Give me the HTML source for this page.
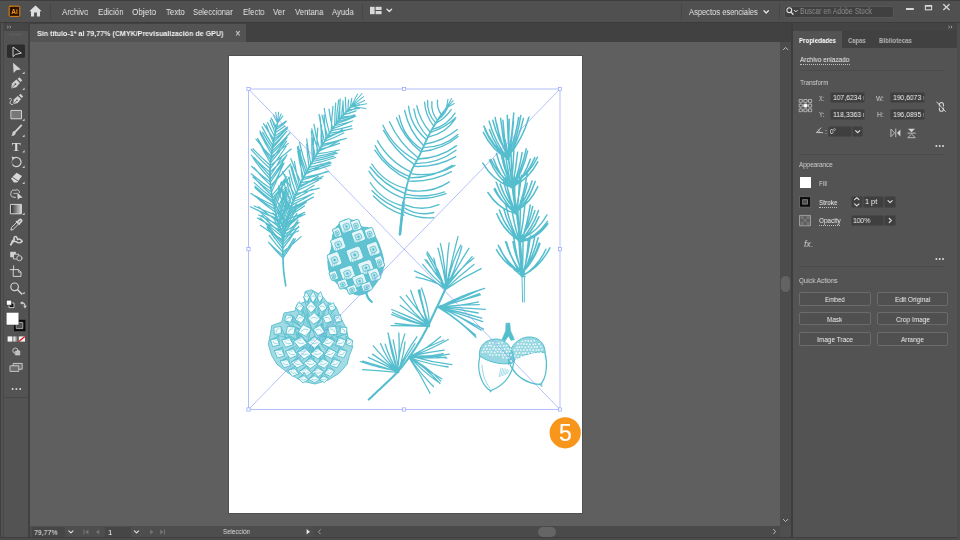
<!DOCTYPE html>
<html lang="es">
<head>
<meta charset="utf-8">
<title>Sin título-1* al 79,77% (CMYK/Previsualización de GPU)</title>
<style>
*{box-sizing:border-box;margin:0;padding:0}
html,body{width:960px;height:540px;overflow:hidden;background:#535353;font-family:"Liberation Sans",sans-serif;font-size:9px;color:#e0e0e0}
#app{position:relative;width:960px;height:540px;overflow:hidden;background:#4f4f4f}
#app>div,#app>span,#app>svg{position:absolute}
.t{white-space:nowrap;display:block;will-change:transform}
.fld{background:#3f3f3f;border:1px solid #484848;border-radius:2px}
.btn{border:1px solid #6b6b6b;border-radius:2px;background:#505050}
.hr{height:1px;background:#474747}
</style>
</head>
<body>
<div id="app">
<div style="left:0px;top:0px;width:960px;height:23px;background:#505050;"></div>
<div style="left:0px;top:0px;width:960px;height:1px;background:#3e3e3e;"></div>
<div style="left:0px;top:22px;width:960px;height:1px;background:#3b3b3b;"></div>
<div style="left:0px;top:23px;width:4px;height:517px;background:#525252;"></div>
<div style="left:0px;top:23px;width:1px;height:517px;background:#404040;"></div>
<div style="left:3px;top:23px;width:1px;height:514px;background:#494949;"></div>
<div style="left:4px;top:23px;width:26px;height:514px;background:#535353;"></div>
<div style="left:4px;top:23px;width:26px;height:8px;background:#464646;"></div>
<div style="left:28px;top:23px;width:2px;height:514px;background:#414141;"></div>
<div style="left:4px;top:397px;width:24px;height:1px;background:#484848;"></div>
<div style="left:30px;top:23px;width:761px;height:19px;background:#414141;"></div>
<div style="left:30px;top:24px;width:216px;height:18px;background:#535353;"></div>
<div style="left:30px;top:42px;width:750px;height:484px;background:#5f5f5f;"></div>
<div style="left:780px;top:42px;width:11px;height:484px;background:#4c4c4c;"></div>
<div style="left:781px;top:276px;width:9px;height:16px;background:#636363;border-radius:4.5px"></div>
<div style="left:30px;top:526px;width:761px;height:11px;background:#4e4e4e;"></div>
<div style="left:313px;top:526px;width:467px;height:11px;background:#4a4a4a;"></div>
<div style="left:538px;top:527px;width:18px;height:10px;background:#656565;border-radius:5px"></div>
<div style="left:780px;top:526px;width:11px;height:11px;background:#4f4f4f;"></div>
<div style="left:32px;top:527px;width:33px;height:10px;background:#464646;"></div>
<div style="left:105px;top:527px;width:26px;height:10px;background:#464646;"></div>
<div style="left:0px;top:537px;width:960px;height:3px;background:#4b4b4b;"></div>
<div style="left:0px;top:537px;width:960px;height:1px;background:#3f3f3f;"></div>
<div style="left:228px;top:55px;width:355px;height:459px;background:#505050;"></div>
<div style="left:229px;top:56px;width:353px;height:457px;background:#ffffff;"></div>
<div style="left:791px;top:23px;width:2px;height:514px;background:#3d3d3d;"></div>
<div style="left:793px;top:23px;width:164px;height:514px;background:#535353;"></div>
<div style="left:793px;top:23px;width:164px;height:8px;background:#444444;"></div>
<div style="left:793px;top:31px;width:164px;height:17px;background:#414141;"></div>
<div style="left:793px;top:31px;width:49px;height:17px;background:#535353;"></div>
<div style="left:957px;top:23px;width:3px;height:517px;background:#4d4d4d;"></div>
<div style="left:784px;top:6px;width:110px;height:11.5px;background:#404040;border:1px solid #565656;border-radius:1px"></div>
<div style="left:50px;top:3px;width:1px;height:17px;background:#474747;"></div>
<div style="left:362px;top:3px;width:1px;height:17px;background:#474747;"></div>
<div style="left:681px;top:3px;width:1px;height:17px;background:#474747;"></div>
<div style="left:779px;top:3px;width:1px;height:17px;background:#474747;"></div>
<span class="t" style="left:61.5px;top:6.9px;font-size:9.6px;line-height:9.6px;color:#e4e4e4;transform:scaleX(0.828);transform-origin:0 0;">Archivo</span>
<span class="t" style="left:97.5px;top:6.9px;font-size:9.6px;line-height:9.6px;color:#e4e4e4;transform:scaleX(0.810);transform-origin:0 0;">Edición</span>
<span class="t" style="left:132.0px;top:6.9px;font-size:9.6px;line-height:9.6px;color:#e4e4e4;transform:scaleX(0.849);transform-origin:0 0;">Objeto</span>
<span class="t" style="left:165.6px;top:6.9px;font-size:9.6px;line-height:9.6px;color:#e4e4e4;transform:scaleX(0.819);transform-origin:0 0;">Texto</span>
<span class="t" style="left:193.3px;top:6.9px;font-size:9.6px;line-height:9.6px;color:#e4e4e4;transform:scaleX(0.791);transform-origin:0 0;">Seleccionar</span>
<span class="t" style="left:242.5px;top:6.9px;font-size:9.6px;line-height:9.6px;color:#e4e4e4;transform:scaleX(0.790);transform-origin:0 0;">Efecto</span>
<span class="t" style="left:273.3px;top:6.9px;font-size:9.6px;line-height:9.6px;color:#e4e4e4;transform:scaleX(0.826);transform-origin:0 0;">Ver</span>
<span class="t" style="left:294.6px;top:6.9px;font-size:9.6px;line-height:9.6px;color:#e4e4e4;transform:scaleX(0.806);transform-origin:0 0;">Ventana</span>
<span class="t" style="left:331.7px;top:6.9px;font-size:9.6px;line-height:9.6px;color:#e4e4e4;transform:scaleX(0.799);transform-origin:0 0;">Ayuda</span>
<span class="t" style="left:688.5px;top:6.9px;font-size:9.6px;line-height:9.6px;color:#e4e4e4;transform:scaleX(0.786);transform-origin:0 0;">Aspectos esenciales</span>
<span class="t" style="left:800.0px;top:8.1px;font-size:8.2px;line-height:8.2px;color:#8c8c8c;transform:scaleX(0.845);transform-origin:0 0;">Buscar en Adobe Stock</span>
<span class="t" style="left:37.0px;top:29.8px;font-size:7.6px;line-height:7.6px;color:#f2f2f2;transform:scaleX(0.936);transform-origin:0 0;font-weight:bold;">Sin título-1* al 79,77% (CMYK/Previsualización de GPU)</span>
<span class="t" style="left:235.0px;top:27.7px;font-size:11.5px;line-height:11.5px;color:#e8e8e8;transform:scaleX(0.834);transform-origin:0 0;">×</span>
<span class="t" style="left:34.4px;top:528.6px;font-size:7.8px;line-height:7.8px;color:#ececec;transform:scaleX(0.892);transform-origin:0 0;">79,77%</span>
<span class="t" style="left:107.6px;top:528.6px;font-size:7.8px;line-height:7.8px;color:#ececec;">1</span>
<span class="t" style="left:223.0px;top:529.2px;font-size:6.8px;line-height:6.8px;color:#dcdcdc;transform:scaleX(0.916);transform-origin:0 0;">Selección</span>
<svg id="art" style="left:0;top:0" width="960" height="540" viewBox="0 0 960 540" fill="none" stroke="#55bece" stroke-linecap="round" stroke-linejoin="round">
<path stroke-width="1.7" d="M285.7 285.8 L285.6 285.0 L285.5 284.1 L285.3 283.0 L285.1 281.8 L284.9 280.4 L284.7 279.0 L284.5 277.5 L284.3 276.0 L284.1 274.5 L283.9 272.9 L283.7 271.4 L283.6 270.0 L283.5 268.6 L283.4 267.1 L283.3 265.6 L283.2 264.1 L283.2 262.6 L283.1 261.0 L283.1 259.5 L283.0 257.9 L283.0 256.4 L282.9 254.9 L282.9 253.4 L282.8 252.0 L282.7 250.6 L282.7 249.3 L282.7 248.0 L282.7 246.7 L282.7 245.4 L282.7 244.1 L282.7 242.8 L282.6 241.6 L282.5 240.2 L282.4 238.9 L282.2 237.5 L282.0 236.0 L281.7 234.5 L281.3 232.9 L280.9 231.4 L280.5 229.7 L280.0 228.1 L279.5 226.4 L279.0 224.7 L278.5 223.0 L277.9 221.3 L277.4 219.6 L277.0 217.8 L276.5 216.0 L276.1 214.2 L275.6 212.3 L275.1 210.4 L274.7 208.5 L274.2 206.5 L273.8 204.6 L273.3 202.6 L272.9 200.6 L272.5 198.7 L272.1 196.8 L271.8 194.9 L271.5 193.0 L271.2 191.2 L271.0 189.4 L270.8 187.6 L270.6 185.8 L270.5 184.1 L270.3 182.3 L270.2 180.6 L270.1 178.9 L270.1 177.1 L270.0 175.4 L270.0 173.7 L270.0 172.0 L270.0 170.3 L270.1 168.6 L270.2 166.9 L270.3 165.2 L270.4 163.5 L270.6 161.8 L270.8 160.1 L271.0 158.5 L271.2 156.8 L271.4 155.2 L271.6 153.6 L271.8 152.0 L272.0 150.4 L272.3 148.8 L272.5 147.2 L272.8 145.6 L273.1 144.0 L273.4 142.4 L273.6 140.9 L273.9 139.4 L274.2 138.0 L274.5 136.6 L274.8 135.2 L275.0 134.0 L275.2 132.8 L275.5 131.6 L275.7 130.5 L276.0 129.4 L276.2 128.4 L276.4 127.4 L276.7 126.4 L276.9 125.6 L277.1 124.8 L277.2 124.1 L277.4 123.5 L277.5 123.0"/>
<path stroke-width="1.25" d="M283.0 257.9 Q275.7 251.0 269.3 243.2 M283.0 257.9 Q289.7 248.7 295.4 238.9 M282.9 255.4 Q275.3 249.2 268.4 242.1 M282.9 255.4 Q288.8 247.3 293.8 238.6 M282.8 252.0 Q275.5 244.2 269.2 235.4 M282.8 252.0 Q292.4 244.8 301.1 236.6 M282.7 248.5 Q274.4 238.2 267.0 227.1 M282.7 248.5 Q289.3 240.2 295.1 231.3 M282.7 245.1 Q274.4 235.8 267.3 225.5 M282.7 245.1 Q291.1 236.0 298.8 226.4 M282.7 242.6 Q273.6 233.3 265.6 223.0 M282.7 242.6 Q290.8 232.9 297.8 222.3 M282.5 239.9 Q271.1 233.1 260.4 225.3 M282.5 239.9 Q290.9 230.5 298.0 220.0 M282.1 236.6 Q270.7 227.7 260.0 217.9 M282.1 236.6 Q289.9 225.4 296.8 213.6 M281.5 233.7 Q271.1 225.2 261.9 215.3 M281.5 233.7 Q289.5 221.9 296.3 209.3 M280.7 230.6 Q268.7 224.9 257.4 218.0 M280.7 230.6 Q289.5 218.8 296.9 206.0 M279.8 227.5 Q268.5 219.5 258.2 210.1 M279.8 227.5 Q288.7 216.2 296.4 204.1 M279.0 224.7 Q268.6 220.4 258.7 215.0 M279.0 224.7 Q283.2 213.9 286.7 202.7 M278.0 221.6 Q267.9 214.7 258.5 206.8 M278.0 221.6 Q284.8 212.1 290.4 202.0 M277.2 218.6 Q263.5 213.6 250.5 206.7 M277.2 218.6 Q282.7 206.8 286.9 194.5 M276.3 215.3 Q265.1 211.1 254.2 206.0 M276.3 215.3 Q281.6 204.2 285.7 192.5 M275.6 212.3 Q266.2 205.7 257.5 198.2 M275.6 212.3 Q282.0 200.2 286.6 187.2 M274.8 209.1 Q262.7 202.2 251.6 193.7 M274.8 209.1 Q280.5 195.1 284.2 180.4 M274.0 205.8 Q262.2 200.3 250.9 193.5 M274.0 205.8 Q279.6 192.9 284.2 179.6 M273.5 203.3 Q263.8 196.0 255.0 187.7 M273.5 203.3 Q277.9 192.8 281.4 181.8 M272.9 200.9 Q263.4 194.3 255.0 186.3 M272.9 200.9 Q279.7 190.9 285.5 180.2 M272.4 198.1 Q262.7 191.0 254.2 182.6 M272.4 198.1 Q281.4 188.3 289.2 177.4 M271.9 195.7 Q262.5 187.0 253.9 177.5 M271.9 195.7 Q279.7 186.4 286.7 176.6 M271.4 192.2 Q261.7 185.1 252.9 177.0 M271.4 192.2 Q277.4 180.0 281.5 167.1 M270.9 188.8 Q260.7 181.8 251.2 173.8 M270.9 188.8 Q278.2 176.3 284.0 163.0 M270.6 185.4 Q261.7 177.1 254.1 167.6 M270.6 185.4 Q281.3 175.5 290.6 164.0 M270.3 182.1 Q260.6 174.8 251.8 166.5 M270.3 182.1 Q277.0 173.0 283.1 163.4 M270.2 179.3 Q260.7 169.2 252.9 157.7 M270.2 179.3 Q279.4 167.8 286.9 154.9 M270.0 175.8 Q261.9 167.2 254.5 157.8 M270.0 175.8 Q276.9 166.2 282.5 155.8 M270.0 172.3 Q260.1 164.3 251.3 155.1 M270.0 172.3 Q278.3 164.8 285.7 156.3 M270.1 168.8 Q260.1 159.7 251.1 149.4 M270.1 168.8 Q278.6 158.1 286.0 146.5 M270.3 165.5 Q261.2 157.6 252.9 148.8 M270.3 165.5 Q281.1 157.7 291.2 149.1 M270.5 162.9 Q263.2 151.2 257.7 138.5 M270.5 162.9 Q279.3 152.7 286.6 141.2 M270.8 159.8 Q263.9 149.6 257.8 138.9 M270.8 159.8 Q279.6 149.1 287.0 137.4 M271.2 156.7 Q263.0 148.5 256.0 139.1 M271.2 156.7 Q280.1 150.5 288.3 143.4 M271.5 154.0 Q265.3 143.8 260.1 133.0 M271.5 154.0 Q279.2 147.0 285.7 138.9 M271.9 151.2 Q265.2 141.6 260.0 131.0 M271.9 151.2 Q281.4 142.6 290.0 132.9 M272.4 148.2 Q267.1 140.6 262.7 132.4 M272.4 148.2 Q278.8 141.7 284.3 134.2 M272.8 145.6 Q266.9 136.6 262.1 126.9 M272.8 145.6 Q280.3 138.8 286.9 131.1 M273.4 142.3 Q269.4 133.8 266.3 125.0 M273.4 142.3 Q280.7 135.6 287.3 128.1 M273.9 139.3 Q268.3 131.8 263.5 123.6 M273.9 139.3 Q280.7 134.4 286.9 128.7 M274.6 136.2 Q270.7 129.6 267.6 122.6 M274.6 136.2 Q281.5 132.1 287.7 127.1 M275.3 132.7 Q272.3 126.7 270.3 120.2 M275.3 132.7 Q280.3 129.6 285.0 126.1 M275.9 129.8 Q273.9 124.9 272.3 119.7 M275.9 129.8 Q281.1 126.3 285.8 122.0 M276.5 127.3 Q273.6 122.8 271.1 118.1 M276.5 127.3 Q281.5 124.4 286.3 121.1"/>
<path stroke-width="1.7" d="M283.2 240.0 L283.4 239.1 L283.6 238.0 L283.9 236.7 L284.1 235.3 L284.5 233.7 L284.8 232.1 L285.1 230.3 L285.5 228.6 L285.9 226.9 L286.3 225.2 L286.6 223.5 L287.0 222.0 L287.4 220.6 L287.7 219.1 L288.1 217.7 L288.5 216.3 L288.9 214.9 L289.3 213.5 L289.7 212.1 L290.1 210.7 L290.6 209.3 L291.0 207.9 L291.5 206.4 L292.0 205.0 L292.5 203.5 L293.0 202.0 L293.6 200.5 L294.2 199.0 L294.7 197.4 L295.3 195.9 L295.9 194.3 L296.6 192.8 L297.2 191.3 L297.8 189.8 L298.4 188.4 L299.0 187.0 L299.6 185.7 L300.2 184.4 L300.7 183.2 L301.3 182.0 L301.8 180.9 L302.4 179.7 L303.0 178.6 L303.6 177.4 L304.3 176.1 L305.0 174.8 L305.7 173.5 L306.5 172.0 L307.4 170.4 L308.3 168.8 L309.3 167.0 L310.3 165.2 L311.4 163.4 L312.5 161.5 L313.6 159.6 L314.7 157.8 L315.8 155.9 L316.9 154.0 L318.0 152.2 L319.0 150.5 L320.0 148.8 L321.1 147.0 L322.1 145.3 L323.1 143.6 L324.2 141.9 L325.2 140.2 L326.2 138.5 L327.2 136.9 L328.2 135.3 L329.2 133.8 L330.1 132.4 L331.0 131.0 L331.8 129.7 L332.7 128.6 L333.4 127.5 L334.1 126.5 L334.9 125.5 L335.6 124.6 L336.3 123.7 L337.0 122.8 L337.7 121.9 L338.4 120.9 L339.2 120.0 L340.0 119.0 L340.9 117.9 L341.8 116.8 L342.9 115.6 L343.9 114.4 L345.0 113.2 L346.1 112.0 L347.1 110.8 L348.1 109.8 L349.0 108.8 L349.8 107.9 L350.5 107.1 L351.0 106.5"/>
<path stroke-width="1.25" d="M283.8 237.0 Q278.3 228.5 274.2 219.1 M283.8 237.0 Q291.4 234.3 298.7 230.8 M284.4 234.1 Q279.4 225.9 275.3 217.3 M284.4 234.1 Q291.7 231.1 298.7 227.2 M285.0 231.2 Q280.7 221.9 277.7 212.0 M285.0 231.2 Q292.3 227.4 299.1 222.6 M285.6 227.9 Q279.0 220.7 273.0 212.9 M285.6 227.9 Q294.1 221.5 301.9 214.3 M286.2 225.4 Q279.6 214.5 274.5 202.8 M286.2 225.4 Q293.7 220.7 300.5 214.8 M286.9 222.4 Q281.0 214.2 275.7 205.4 M286.9 222.4 Q296.2 218.7 305.1 214.3 M287.8 219.0 Q280.8 208.1 274.6 196.7 M287.8 219.0 Q296.4 216.3 304.7 212.4 M288.5 216.2 Q283.1 205.2 279.4 193.4 M288.5 216.2 Q296.7 211.5 304.4 205.9 M289.3 213.6 Q285.3 203.3 282.1 192.8 M289.3 213.6 Q298.0 208.4 306.2 202.3 M290.2 210.4 Q285.3 199.0 281.4 187.1 M290.2 210.4 Q298.6 206.2 306.5 201.2 M291.0 208.1 Q284.3 197.2 278.6 185.8 M291.0 208.1 Q302.4 203.1 313.4 197.1 M292.0 204.9 Q286.8 193.3 283.3 181.0 M292.0 204.9 Q302.3 200.2 311.8 194.3 M293.2 201.5 Q288.0 188.3 284.6 174.5 M293.2 201.5 Q303.7 198.0 313.7 193.3 M294.1 199.2 Q290.8 188.4 289.0 177.1 M294.1 199.2 Q303.3 194.6 312.1 189.2 M295.3 196.0 Q288.3 184.1 282.5 171.6 M295.3 196.0 Q305.0 191.2 314.1 185.3 M296.2 193.6 Q291.8 182.2 289.1 170.1 M296.2 193.6 Q307.8 191.4 319.2 188.1 M297.6 190.3 Q293.7 178.2 290.7 165.8 M297.6 190.3 Q308.3 185.8 318.5 180.2 M298.6 187.9 Q294.6 177.2 291.7 166.2 M298.6 187.9 Q308.7 182.5 318.3 176.4 M299.6 185.7 Q296.3 173.8 294.4 161.5 M299.6 185.7 Q311.6 181.7 323.1 176.2 M301.0 182.7 Q295.3 171.0 290.9 158.7 M301.0 182.7 Q311.4 181.2 321.7 178.3 M302.3 179.8 Q300.2 165.2 300.2 150.2 M302.3 179.8 Q314.6 176.6 326.4 171.6 M303.5 177.6 Q299.7 164.6 297.7 151.2 M303.5 177.6 Q316.3 175.2 328.8 171.3 M305.1 174.5 Q300.7 160.9 297.4 147.0 M305.1 174.5 Q314.7 170.0 323.7 164.5 M306.3 172.3 Q301.5 159.5 298.2 146.1 M306.3 172.3 Q318.5 169.4 330.3 165.1 M307.5 170.2 Q302.7 156.5 299.5 142.4 M307.5 170.2 Q319.5 167.0 331.2 162.9 M309.1 167.3 Q307.4 155.7 306.7 144.0 M309.1 167.3 Q319.7 165.3 329.9 161.8 M310.9 164.2 Q308.1 151.6 306.7 138.8 M310.9 164.2 Q323.3 161.6 335.4 157.5 M312.5 161.5 Q311.6 149.6 311.8 137.7 M312.5 161.5 Q323.3 159.4 333.9 156.1 M313.7 159.4 Q312.9 147.1 313.7 134.8 M313.7 159.4 Q325.7 156.9 337.4 153.2 M315.3 156.8 Q312.7 144.0 311.3 131.1 M315.3 156.8 Q325.7 155.3 335.8 152.2 M317.1 153.8 Q316.5 140.9 317.7 128.1 M317.1 153.8 Q328.2 152.4 339.3 150.0 M318.4 151.5 Q314.5 140.4 311.8 128.9 M318.4 151.5 Q328.9 147.1 338.7 141.0 M319.7 149.3 Q315.9 137.0 314.0 124.3 M319.7 149.3 Q329.8 147.1 339.5 143.4 M321.3 146.7 Q320.8 136.0 321.6 125.2 M321.3 146.7 Q331.2 143.6 340.9 139.7 M322.7 144.3 Q320.9 130.7 320.1 116.9 M322.7 144.3 Q334.5 141.8 346.2 138.3 M324.5 141.3 Q321.1 128.0 319.0 114.4 M324.5 141.3 Q334.4 137.9 343.7 133.0 M326.1 138.7 Q324.6 126.9 324.1 115.1 M326.1 138.7 Q334.6 134.7 342.5 129.6 M327.6 136.3 Q324.3 125.8 322.0 115.1 M327.6 136.3 Q336.7 133.7 345.5 130.1 M329.5 133.3 Q326.1 121.1 324.2 108.5 M329.5 133.3 Q340.9 131.6 352.1 128.6 M331.3 130.6 Q331.5 118.5 333.0 106.4 M331.3 130.6 Q341.5 128.7 351.6 125.8 M332.7 128.6 Q330.3 119.0 329.0 109.1 M332.7 128.6 Q341.5 125.9 349.9 122.0 M334.7 125.7 Q334.7 114.3 335.7 103.0 M334.7 125.7 Q343.7 123.7 352.6 121.0 M336.3 123.6 Q336.8 111.8 338.7 100.1 M336.3 123.6 Q346.3 120.6 355.7 116.1 M338.1 121.3 Q338.8 112.5 340.2 103.7 M338.1 121.3 Q345.4 119.5 352.6 117.0 M339.8 119.2 Q339.4 109.1 340.2 99.0 M339.8 119.2 Q347.4 117.5 354.7 114.9 M341.7 117.0 Q342.0 109.8 343.0 102.6 M341.7 117.0 Q348.2 116.7 354.6 115.7 M343.7 114.6 Q343.1 107.8 343.0 100.9 M343.7 114.6 Q350.0 113.1 356.0 110.8 M346.1 112.0 Q345.5 104.6 345.4 97.3 M346.1 112.0 Q352.0 110.1 357.6 107.4 M348.1 109.8 Q348.1 104.8 348.6 99.8 M348.1 109.8 Q353.7 109.5 359.4 108.5 M350.5 107.1 Q350.9 102.7 351.8 98.4 M350.5 107.1 Q355.0 106.3 359.4 104.9"/>
<path stroke-width="1.05" d="M351.0 106.5 Q354.3 100.3 357.6 94.1 M351.0 106.5 Q356.5 100.0 361.9 93.5 M351.0 106.5 Q357.3 101.6 363.6 96.6 M351.0 106.5 Q357.9 103.4 364.7 100.4 M351.0 106.5 Q358.9 105.1 366.8 103.7 M351.0 106.5 Q358.4 107.5 365.9 108.6 M277.5 123.0 Q275.4 119.0 273.3 115.1 M277.5 123.0 Q276.5 117.6 275.6 112.2 M277.5 123.0 Q278.1 117.5 278.6 112.1 M277.5 123.0 Q279.4 118.4 281.2 113.7 M277.5 123.0 Q280.3 119.5 283.0 115.9"/>
<path stroke-width="1.0" d="M282.5 238.0 L282.5 237.2 L282.6 236.3 L282.7 235.1 L282.7 233.9 L282.8 232.5 L282.9 231.1 L283.0 229.5 L283.1 228.0 L283.2 226.4 L283.3 224.9 L283.4 223.4 L283.5 222.0 L283.6 220.6 L283.8 219.2 L284.0 217.8 L284.1 216.3 L284.3 214.9 L284.5 213.4 L284.7 212.0 L284.9 210.6 L285.1 209.1 L285.2 207.7 L285.4 206.3 L285.5 205.0 L285.6 203.6 L285.7 202.2 L285.7 200.8 L285.8 199.3 L285.8 197.8 L285.9 196.4 L285.9 195.1 L285.9 193.8 L285.9 192.6 L286.0 191.6 L286.0 190.7 L286.0 190.0"/>
<path stroke-width="0.9" d="M283.0 228.4 Q280.9 224.9 279.4 221.1 M283.0 228.4 Q285.0 225.8 286.4 222.8 M283.2 226.2 Q280.8 222.7 279.1 218.8 M283.2 226.2 Q285.3 223.1 286.8 219.6 M283.4 223.7 Q281.6 220.2 280.6 216.5 M283.4 223.7 Q286.1 220.3 288.2 216.6 M283.6 221.2 Q281.8 217.2 280.7 212.9 M283.6 221.2 Q286.9 217.6 289.4 213.3 M283.8 218.8 Q281.9 214.7 281.1 210.3 M283.8 218.8 Q286.9 215.4 289.6 211.7 M284.1 216.4 Q281.8 212.2 280.2 207.6 M284.1 216.4 Q287.9 212.3 291.1 207.6 M284.4 214.5 Q282.3 210.1 281.2 205.3 M284.4 214.5 Q287.8 210.3 290.3 205.3 M284.7 212.1 Q282.4 206.9 280.9 201.4 M284.7 212.1 Q287.9 208.8 290.6 205.1 M285.0 209.5 Q282.7 204.5 281.3 199.1 M285.0 209.5 Q287.8 206.0 289.9 202.0 M285.3 206.9 Q283.1 203.4 281.5 199.5 M285.3 206.9 Q288.6 202.7 291.2 198.0 M285.5 205.0 Q283.6 201.1 282.6 196.8 M285.5 205.0 Q288.7 201.4 290.8 197.0 M285.7 202.2 Q283.8 198.9 282.8 195.3 M285.7 202.2 Q287.9 199.4 289.5 196.2 M285.8 199.9 Q283.9 196.8 282.5 193.4 M285.8 199.9 Q287.7 196.9 289.0 193.6 M285.9 197.1 Q284.0 193.7 282.6 190.2 M285.9 197.1 Q287.9 194.0 289.2 190.6 M285.9 194.7 Q284.5 192.2 283.5 189.5 M285.9 194.7 Q287.6 192.6 288.8 190.3 M286.0 191.9 Q284.8 189.9 284.2 187.7 M286.0 191.9 Q287.2 190.3 288.2 188.5"/>
<path stroke-width="1.8" d="M399.9 234.4 L400.0 233.5 L400.2 232.3 L400.3 230.9 L400.5 229.4 L400.6 227.7 L400.8 225.9 L401.0 224.1 L401.2 222.2 L401.4 220.3 L401.6 218.5 L401.8 216.8 L402.0 215.2 L402.2 213.7 L402.3 212.2 L402.5 210.8 L402.6 209.4 L402.8 208.0 L403.0 206.6 L403.1 205.2 L403.3 203.7 L403.5 202.2 L403.8 200.7 L404.1 199.1 L404.4 197.4 L404.7 195.6 L405.1 193.8 L405.5 191.8 L406.0 189.8 L406.4 187.7 L406.9 185.6 L407.4 183.5 L408.0 181.4 L408.5 179.4 L409.1 177.4 L409.7 175.5 L410.3 173.8 L410.9 172.1 L411.6 170.5 L412.3 169.0 L413.0 167.6 L413.7 166.2 L414.5 164.8 L415.2 163.4 L416.0 162.0 L416.8 160.6 L417.6 159.2 L418.4 157.6 L419.2 156.0 L420.0 154.3 L420.8 152.5 L421.7 150.6 L422.6 148.7 L423.5 146.7 L424.3 144.7 L425.2 142.8 L426.1 140.8 L427.0 138.9 L427.9 137.1 L428.7 135.4 L429.5 133.8 L430.3 132.3 L431.1 130.9 L431.9 129.5 L432.6 128.2 L433.4 126.9 L434.1 125.7 L434.8 124.5 L435.6 123.4 L436.3 122.3 L437.0 121.2 L437.7 120.1 L438.4 119.0 L439.1 117.9 L439.9 116.8 L440.6 115.8 L441.4 114.7 L442.2 113.6 L443.0 112.6 L443.7 111.7 L444.4 110.8 L445.0 110.0 L445.5 109.2 L446.0 108.6 L446.4 108.1"/>
<path stroke-width="2.6" d="M399.9 234.4 L400.0 233.5 L400.2 232.3 L400.3 230.9 L400.5 229.4 L400.6 227.7 L400.8 225.9 L401.0 224.1 L401.2 222.2 L401.4 220.3 L401.6 218.5 L401.8 216.8 L402.0 215.2 L402.2 213.7 L402.3 212.2 L402.5 210.8 L402.6 209.4 L402.8 208.0 L403.0 206.6 L403.1 205.2 L403.3 203.7 L403.5 202.2"/>
<path stroke-width="1.35" d="M403.8 215.2 Q386.2 209.4 373.4 196.0 M404.1 210.9 Q385.6 204.7 372.0 190.7 M404.4 206.3 Q382.4 201.4 370.2 182.5 M405.0 198.9 Q382.2 191.2 368.9 171.2 M405.8 193.8 Q384.0 185.7 370.1 167.0 M406.7 188.6 Q384.3 183.4 371.8 164.0 M408.8 179.7 Q387.6 169.8 374.8 150.1 M410.0 176.7 Q386.4 168.0 375.1 145.6 M411.8 172.3 Q389.6 162.0 377.5 140.8 M414.7 164.9 Q395.0 151.4 383.5 130.4 M416.5 160.5 Q393.8 148.5 382.9 125.3 M417.7 157.5 Q399.1 143.2 389.5 121.7 M420.7 151.6 Q403.6 138.2 396.5 117.8 M421.8 149.3 Q403.2 137.2 399.2 115.4 M423.6 145.7 Q409.0 130.8 404.6 110.5 M426.6 139.7 Q410.8 126.6 408.5 106.2 M428.0 137.1 Q416.3 125.3 413.9 109.0 M430.4 132.3 Q420.1 120.9 416.8 105.8 M434.0 126.4 Q425.4 115.8 424.6 102.2 M435.9 123.2 Q426.8 113.6 427.6 100.4 M437.5 120.5 Q430.8 112.2 431.9 101.6 M441.4 114.6 Q436.5 108.1 437.5 100.1 M404.4 212.2 Q418.3 219.2 433.7 217.6 M404.7 208.2 Q418.3 216.5 433.7 212.5 M405.0 204.8 Q422.0 211.8 439.0 204.7 M405.9 197.4 Q426.5 200.8 446.1 193.6 M406.5 194.4 Q425.8 198.6 444.5 191.9 M407.3 190.0 Q430.0 194.5 449.4 181.9 M409.7 181.2 Q431.9 182.1 451.4 171.7 M410.6 177.8 Q433.3 177.6 452.4 165.4 M411.8 173.8 Q434.8 177.4 454.9 165.3 M414.7 166.4 Q436.6 167.3 455.8 156.6 M415.8 163.6 Q438.1 163.5 456.0 150.2 M417.7 159.0 Q439.3 158.4 456.6 145.6 M421.5 151.6 Q442.2 149.8 458.1 136.6 M423.4 147.6 Q443.1 147.5 457.9 134.5 M425.1 144.2 Q443.1 141.2 457.3 129.6 M428.6 136.8 Q445.6 133.5 455.1 119.1 M431.1 132.1 Q445.2 127.8 455.8 117.5 M432.5 129.4 Q446.9 125.6 455.1 113.1 M436.3 122.9 Q445.5 118.1 451.2 109.6 M438.5 119.3 Q446.2 114.1 447.8 105.0 M439.9 117.0 Q446.4 112.7 448.3 105.1"/>
<path stroke-width="1.1" d="M446.4 108.1 Q447.2 103.6 448.0 99.2 M446.4 108.1 Q449.0 103.2 451.6 98.4 M446.4 108.1 Q449.7 104.4 453.1 100.6 M446.4 108.1 Q450.3 105.8 454.2 103.6"/>
<path stroke-width="1.8" d="M523.0 276.0 L522.9 274.3 L522.7 272.3 L522.5 269.8 L522.2 267.0 L522.0 264.0 L521.7 260.9 L521.4 257.6 L521.1 254.3 L520.9 251.0 L520.6 247.8 L520.3 244.8 L520.0 242.0 L519.7 239.3 L519.5 236.7 L519.2 234.1 L518.9 231.6 L518.6 229.0 L518.3 226.5 L518.0 224.0 L517.7 221.6 L517.4 219.1 L517.1 216.7 L516.8 214.3 L516.5 212.0 L516.2 209.7 L515.9 207.5 L515.5 205.3 L515.2 203.1 L514.9 201.0 L514.5 198.9 L514.2 196.8 L513.9 194.7 L513.5 192.5 L513.2 190.4 L512.8 188.2 L512.5 186.0 L512.2 183.7 L511.8 181.3 L511.4 178.9 L511.1 176.4 L510.7 174.0 L510.4 171.5 L510.0 169.1 L509.6 166.7 L509.3 164.3 L509.0 162.1 L508.6 160.0 L508.3 158.0 L508.0 156.1 L507.7 154.2 L507.3 152.4 L507.0 150.6 L506.7 148.9 L506.4 147.2 L506.1 145.7 L505.8 144.3 L505.6 143.0 L505.3 141.8 L505.2 140.8 L505.0 140.0"/>
<path stroke-width="1.0" d="M522.0 277.0 L522.6 302.0 M524.4 277.0 L524.3 302.0"/>
<path stroke-width="1.6" d="M521.4 276.5 L525.0 276.5"/>
<path stroke-width="1.5" d="M508.7 159.2 Q492.3 150.8 483.3 132.4 M509.0 159.0 Q493.0 148.8 484.9 129.8 M508.0 158.0 Q491.9 146.2 483.9 126.1 M508.6 159.5 Q495.6 147.4 489.4 129.5 M508.0 158.6 Q494.9 142.2 489.1 121.1 M509.1 156.3 Q497.7 140.1 492.8 120.2 M508.5 157.7 Q500.1 141.6 496.6 123.3 M508.3 158.2 Q498.9 139.0 495.1 117.6 M507.1 157.1 Q502.4 137.9 500.6 118.2 M507.5 159.2 Q504.1 139.9 502.9 120.3 M509.2 157.1 Q507.8 136.3 507.3 115.3 M508.1 158.8 Q508.9 139.0 509.2 119.2 M508.0 158.0 Q512.2 135.7 513.8 112.9 M508.3 158.9 Q512.1 140.1 513.6 120.9 M509.4 157.0 Q517.6 137.0 520.8 115.4 M507.8 156.7 Q515.5 138.0 518.6 117.6 M508.3 157.1 Q519.0 139.2 523.4 118.3 M508.2 156.3 Q522.6 139.5 528.9 117.3 M511.1 187.0 Q493.5 181.3 482.8 163.1 M512.9 184.6 Q498.5 176.1 490.9 159.4 M511.1 187.4 Q496.7 177.5 489.5 160.0 M511.1 186.7 Q499.2 175.4 493.6 158.9 M512.6 187.3 Q501.3 172.3 496.5 153.5 M511.5 186.2 Q503.4 168.5 500.2 149.1 M512.1 187.0 Q505.6 171.8 502.9 155.1 M511.8 186.9 Q507.1 169.7 505.2 151.7 M512.8 185.9 Q511.3 166.2 510.7 146.4 M511.2 187.8 Q513.3 166.9 514.1 145.9 M512.1 186.7 Q516.0 169.8 517.6 152.3 M512.4 187.6 Q519.4 170.8 522.1 152.6 M512.1 186.8 Q522.1 169.1 526.3 148.7 M513.0 186.7 Q523.3 170.5 527.6 151.1 M513.2 187.9 Q525.0 176.0 530.4 159.1 M512.9 185.6 Q527.5 175.4 534.8 157.6 M511.8 184.8 Q528.5 176.1 537.5 157.3 M512.8 186.2 Q528.8 179.2 537.8 161.8 M515.4 213.3 Q498.6 209.3 487.9 192.5 M517.1 211.0 Q502.5 205.0 494.2 189.3 M516.9 213.4 Q502.5 205.1 494.9 188.4 M516.4 213.8 Q502.6 201.1 496.2 182.3 M516.5 211.5 Q505.2 200.2 500.1 184.1 M516.5 213.5 Q507.1 198.0 503.2 179.9 M516.1 213.5 Q509.0 198.1 506.1 181.1 M517.2 213.9 Q513.2 197.6 511.6 180.8 M515.7 212.4 Q512.6 194.2 511.5 175.7 M515.3 213.9 Q514.7 195.1 514.4 176.3 M517.1 212.5 Q519.0 194.7 519.7 176.9 M515.4 212.4 Q519.8 194.1 521.5 175.3 M517.4 211.4 Q524.4 193.1 527.2 173.4 M516.2 213.4 Q524.1 199.4 527.3 183.2 M516.0 211.2 Q527.1 198.2 532.1 181.0 M515.5 213.2 Q529.0 200.3 535.2 181.5 M515.7 212.9 Q527.6 202.5 533.2 186.7 M516.7 210.9 Q530.5 202.7 537.8 186.6 M519.6 240.4 Q505.6 232.8 498.1 216.9 M519.4 240.8 Q504.5 231.4 496.8 213.7 M518.8 240.2 Q505.6 228.0 499.4 209.9 M519.7 242.5 Q508.5 227.4 503.7 208.5 M519.0 242.1 Q509.6 224.4 505.7 204.4 M519.2 240.6 Q512.9 221.0 510.5 200.4 M520.8 242.6 Q518.3 224.9 517.4 206.9 M520.1 240.4 Q518.2 222.4 517.5 204.4 M519.4 242.3 Q520.2 221.5 520.6 200.7 M520.0 239.6 Q523.7 221.3 525.1 202.7 M520.6 242.9 Q527.5 224.6 530.2 205.1 M520.2 241.3 Q529.1 225.0 532.7 206.4 M518.6 239.9 Q529.8 227.5 534.9 210.6 M519.6 241.5 Q532.5 228.7 538.5 210.4 M518.9 242.4 Q532.3 233.0 539.0 216.6 M518.6 239.7 Q536.4 233.6 546.9 215.0 M520.2 240.6 Q536.7 237.5 547.5 221.3 M519.4 241.6 Q536.1 239.8 547.8 223.7 M523.4 273.1 Q506.5 267.3 496.4 249.6 M522.4 273.2 Q506.5 263.8 498.2 245.3 M521.4 275.6 Q507.1 265.3 499.9 247.5 M523.5 274.7 Q511.0 260.4 505.5 241.4 M522.6 275.9 Q511.4 261.0 506.6 242.3 M523.6 275.1 Q516.0 259.3 512.9 241.7 M522.4 275.6 Q516.1 256.5 513.6 236.3 M523.2 275.2 Q519.9 255.5 518.6 235.6 M521.6 273.7 Q519.4 253.6 518.6 233.5 M522.3 274.7 Q522.9 257.6 523.1 240.4 M523.7 274.8 Q527.1 257.3 528.5 239.4 M522.8 274.4 Q528.3 255.6 530.4 236.0 M522.9 275.0 Q531.5 256.1 535.0 235.3 M521.5 274.7 Q533.2 258.1 538.2 237.8 M522.4 272.7 Q533.9 260.2 539.2 243.0 M521.6 273.4 Q534.1 261.2 539.9 243.7 M522.6 275.9 Q537.9 267.0 545.9 249.3 M522.9 275.3 Q540.3 267.0 549.9 247.8"/>
<path stroke-width="2.1" d="M368.7 399.6 L369.3 399.0 L370.1 398.3 L371.1 397.4 L372.1 396.4 L373.2 395.3 L374.4 394.2 L375.7 393.0 L376.9 391.8 L378.2 390.6 L379.5 389.4 L380.8 388.2 L382.0 387.0 L383.2 385.9 L384.4 384.7 L385.7 383.6 L386.9 382.4 L388.2 381.2 L389.5 380.0 L390.8 378.8 L392.1 377.6 L393.4 376.3 L394.6 375.1 L395.8 373.8 L397.0 372.5 L398.2 371.2 L399.3 369.9 L400.4 368.6 L401.5 367.3 L402.5 366.0 L403.6 364.7 L404.6 363.3 L405.7 361.9 L406.8 360.5 L407.8 359.1 L408.9 357.6 L410.0 356.0 L411.1 354.4 L412.2 352.8 L413.3 351.1 L414.5 349.5 L415.6 347.7 L416.7 346.0 L417.8 344.2 L419.0 342.4 L420.1 340.5 L421.2 338.6 L422.4 336.6 L423.5 334.6 L424.6 332.5 L425.8 330.3 L427.0 327.9 L428.2 325.5 L429.4 323.1 L430.5 320.7 L431.7 318.2 L432.8 315.8 L434.0 313.4 L435.0 311.2 L436.0 309.0 L437.0 307.0 L437.9 305.1 L438.8 303.2 L439.7 301.4 L440.5 299.7 L441.3 298.0 L442.0 296.3 L442.8 294.8 L443.5 293.3 L444.1 291.8 L444.7 290.5 L445.3 289.2 L445.8 288.0 L446.3 286.9 L446.7 285.8 L447.1 284.8 L447.4 283.9 L447.7 283.1 L448.0 282.3 L448.2 281.6 L448.4 281.0 L448.6 280.4 L448.7 279.9 L448.9 279.4 L449.0 279.0"/>
<path stroke-width="1.3" d="M446.4 288.9 Q462.9 277.4 481.2 268.7 M445.7 288.9 Q459.2 275.9 473.9 264.4 M445.7 287.5 Q458.7 271.9 472.1 256.6 M445.2 287.6 Q457.2 270.9 473.8 258.1 M446.4 287.3 Q456.9 267.3 468.9 248.3 M446.5 287.4 Q456.2 267.8 461.8 246.5 M445.4 288.9 Q451.3 262.7 458.0 236.7 M446.7 288.4 Q450.1 265.8 460.8 245.0 M445.5 287.3 Q445.7 265.3 440.4 243.6 M446.0 287.0 Q446.2 265.0 449.1 243.0 M446.4 288.0 Q443.5 267.8 438.0 248.2 M444.9 289.0 Q439.3 269.2 427.2 251.9 M444.8 288.6 Q436.7 270.8 426.8 253.8 M444.9 287.4 Q437.1 273.8 433.8 258.1 M446.7 288.9 Q436.7 273.7 425.0 259.6 M446.4 287.2 Q435.3 274.6 426.5 260.1 M444.9 288.9 Q431.1 277.8 414.4 270.9 M446.6 287.7 Q433.1 277.9 422.7 264.3 M445.4 287.4 Q431.6 280.1 416.0 277.1 M429.6 325.3 Q428.5 306.3 421.5 288.0 M428.4 325.5 Q423.2 307.8 419.1 289.9 M428.4 325.1 Q421.7 308.4 420.0 290.0 M429.3 325.3 Q422.4 308.4 418.3 290.5 M429.2 325.2 Q418.1 310.0 406.3 295.3 M428.2 325.9 Q416.5 309.9 410.7 290.4 M428.5 326.0 Q413.2 312.5 400.2 296.6 M428.4 325.3 Q414.7 314.7 400.2 305.2 M428.9 326.0 Q410.8 316.7 391.7 309.5 M429.2 326.7 Q413.9 318.7 397.9 312.2 M429.0 326.3 Q410.2 321.1 392.5 312.5 M428.2 326.0 Q409.4 321.9 391.6 314.3 M429.5 326.3 Q412.2 325.4 395.0 323.5 M428.1 326.3 Q409.7 325.7 391.2 325.6 M439.6 306.7 Q458.3 320.0 475.5 335.1 M438.7 307.7 Q459.0 319.9 475.9 337.2 M439.9 307.0 Q461.8 317.9 483.4 329.1 M439.9 307.0 Q461.3 317.2 481.3 330.2 M438.3 307.6 Q460.7 314.0 482.7 321.6 M439.2 307.5 Q460.7 311.8 481.7 318.2 M438.3 306.9 Q458.3 308.9 478.1 313.0 M439.3 306.1 Q462.3 308.0 485.3 309.4 M438.3 306.6 Q458.5 306.5 478.5 301.8 M438.9 306.8 Q459.0 304.9 479.2 304.7 M439.8 306.0 Q460.3 301.1 480.4 294.8 M438.2 307.7 Q459.2 301.6 479.6 293.7 M438.2 307.1 Q459.7 299.6 480.3 289.7 M439.6 306.8 Q461.0 295.2 484.6 288.3 M397.1 372.2 Q405.7 357.7 415.0 343.7 M398.0 371.7 Q405.0 353.1 416.9 336.8 M397.9 372.2 Q403.3 357.7 405.0 342.0 M397.6 371.9 Q400.0 352.6 398.8 333.0 M397.6 372.9 Q398.3 353.1 404.8 333.9 M398.8 372.0 Q396.5 355.9 393.2 339.9 M397.8 371.6 Q393.0 352.2 388.0 333.0 M397.7 371.6 Q391.5 354.6 388.7 336.5 M397.9 371.5 Q389.5 359.0 385.2 344.2 M397.3 371.3 Q386.7 359.1 380.5 343.6 M397.7 372.3 Q385.0 359.5 373.2 345.9 M398.3 371.6 Q385.3 363.0 372.5 354.1 M397.9 371.9 Q383.4 364.0 368.3 357.4 M396.9 371.5 Q379.8 366.0 362.5 361.1 M397.9 371.0 Q378.7 368.1 360.2 361.5 M398.2 372.3 Q380.4 370.8 362.6 369.6 M409.6 357.5 Q419.9 373.2 433.4 386.5 M408.9 357.5 Q420.7 374.6 430.0 393.2 M410.4 357.6 Q422.5 371.3 437.9 381.7 M409.8 356.5 Q424.3 369.4 441.8 378.7 M408.9 356.3 Q425.9 368.0 440.0 383.5 M408.9 357.2 Q426.7 366.3 440.9 381.1 M408.9 357.5 Q427.9 364.1 448.1 367.0 M410.2 356.1 Q430.7 361.9 451.9 364.7 M410.0 356.6 Q427.5 359.0 445.4 357.1 M409.0 356.6 Q426.2 357.7 443.3 353.7 M410.3 357.6 Q429.9 358.3 449.3 354.1 M410.0 356.8 Q428.3 354.6 446.8 358.0 M410.2 356.1 Q427.0 352.3 444.2 350.1 M409.9 357.0 Q429.8 349.9 448.3 339.5 M410.3 356.8 Q426.6 348.8 440.5 336.7 M410.3 356.2 Q426.5 346.9 443.9 340.0"/>
<path stroke-width="1.0" fill="#55bece" fill-opacity="0.93" d="M339.0 224.0 L339.7 223.4 L340.6 222.6 L341.7 221.7 L342.9 220.7 L344.2 220.0 L345.5 219.5 L346.9 219.4 L348.5 219.4 L350.1 219.6 L351.8 220.0 L353.4 220.4 L354.8 221.0 L356.0 221.7 L357.1 222.7 L358.1 223.7 L359.1 224.8 L360.1 225.7 L361.3 226.5 L362.6 227.0 L364.0 227.2 L365.5 227.3 L366.9 227.4 L368.3 227.8 L369.6 228.5 L370.8 229.6 L372.0 231.1 L373.1 232.7 L374.1 234.4 L375.1 236.2 L376.0 237.8 L376.8 239.3 L377.5 240.7 L378.2 242.2 L378.8 243.7 L379.4 245.2 L380.0 247.0 L380.7 249.0 L381.4 251.1 L382.1 253.4 L382.7 255.7 L383.2 257.9 L383.5 260.0 L383.7 261.9 L383.7 263.8 L383.6 265.6 L383.4 267.4 L383.1 269.2 L382.6 271.0 L382.0 272.9 L381.2 274.7 L380.3 276.6 L379.2 278.4 L378.1 280.3 L377.0 282.0 L375.8 283.7 L374.5 285.5 L373.2 287.2 L371.8 288.8 L370.3 290.3 L368.7 291.5 L367.0 292.5 L365.2 293.4 L363.3 294.2 L361.4 294.7 L359.5 295.0 L357.6 295.0 L355.8 294.6 L353.9 293.9 L352.1 293.0 L350.2 291.9 L348.4 290.7 L346.5 289.6 L344.6 288.5 L342.6 287.3 L340.6 286.0 L338.7 284.7 L336.9 283.4 L335.4 282.0 L334.1 280.6 L333.0 279.3 L332.0 277.8 L331.2 276.3 L330.4 274.7 L329.8 273.0 L329.2 271.1 L328.7 269.0 L328.3 266.8 L328.1 264.5 L327.9 262.2 L328.0 260.0 L328.3 257.8 L328.9 255.6 L329.7 253.4 L330.5 251.2 L331.2 249.1 L331.7 247.0 L332.0 245.0 L332.1 243.1 L332.2 241.2 L332.3 239.3 L332.4 237.6 L332.6 236.0 L332.9 234.5 L333.4 233.1 L333.8 231.8 L334.3 230.6 L334.9 229.5 L335.4 228.5 L336.0 227.5 L336.7 226.6 L337.4 225.8 L338.0 225.1 L338.6 224.5 L339.0 224.0 Z"/>
<path stroke-width="1.0" fill="#e6f5f8" d="M340.1 221.8 L348.7 218.6 L350.6 219.5 L353.8 228.3 L352.9 230.2 L344.3 233.4 L342.4 232.5 L339.2 223.7 Z"/>
<path stroke-width="0.8" fill="#c9e9ef" d="M343.7 224.5 L347.3 223.2 L348.7 223.8 L349.9 227.2 L349.3 228.5 L345.7 229.8 L344.3 229.2 L343.1 225.8 Z"/>
<path stroke-width="0.5" fill="#55bece" d="M345.7 225.8 L346.7 225.4 L347.2 225.7 L347.5 226.7 L347.3 227.2 L346.3 227.6 L345.8 227.3 L345.5 226.3 Z"/>
<path stroke-width="0.55" d="M344.2 232.7 L344.1 229.9 M346.0 232.0 L346.0 229.2 M347.9 231.4 L347.8 228.6"/>
<path stroke-width="1.0" fill="#e6f5f8" d="M351.1 221.4 L357.3 219.2 L358.7 220.0 L361.4 227.4 L360.9 229.0 L354.7 231.2 L353.3 230.4 L350.6 223.0 Z"/>
<path stroke-width="0.8" fill="#c9e9ef" d="M353.9 223.9 L356.5 223.0 L357.5 223.5 L358.5 226.4 L358.1 227.5 L355.5 228.4 L354.5 227.9 L353.5 225.0 Z"/>
<path stroke-width="0.5" fill="#55bece" d="M355.4 225.1 L356.1 224.8 L356.4 225.0 L356.8 225.9 L356.6 226.3 L355.9 226.6 L355.6 226.4 L355.2 225.5 Z"/>
<path stroke-width="0.55" d="M354.5 230.7 L354.4 228.3 M355.9 230.2 L355.7 227.9 M357.2 229.7 L357.1 227.4"/>
<path stroke-width="1.0" fill="#e6f5f8" d="M333.0 229.2 L338.3 227.3 L339.5 228.0 L341.8 234.5 L341.4 235.8 L336.1 237.7 L334.9 237.0 L332.6 230.5 Z"/>
<path stroke-width="0.8" fill="#c9e9ef" d="M335.4 231.4 L337.6 230.6 L338.4 231.1 L339.4 233.6 L339.0 234.6 L336.8 235.4 L336.0 234.9 L335.0 232.4 Z"/>
<path stroke-width="0.5" fill="#55bece" d="M336.7 232.5 L337.3 232.2 L337.6 232.4 L337.9 233.2 L337.7 233.5 L337.1 233.8 L336.8 233.6 L336.5 232.8 Z"/>
<path stroke-width="0.55" d="M336.0 237.3 L335.9 235.2 M337.1 236.8 L337.0 234.8 M338.3 236.4 L338.1 234.4"/>
<path stroke-width="1.0" fill="#e6f5f8" d="M352.2 232.3 L360.8 229.1 L362.6 230.0 L365.7 238.3 L364.8 240.1 L356.2 243.3 L354.4 242.4 L351.3 234.1 Z"/>
<path stroke-width="0.8" fill="#c9e9ef" d="M355.8 234.8 L359.4 233.5 L360.7 234.1 L361.9 237.3 L361.2 238.6 L357.6 239.9 L356.3 239.3 L355.1 236.1 Z"/>
<path stroke-width="0.5" fill="#55bece" d="M357.7 236.0 L358.7 235.7 L359.2 235.9 L359.5 236.9 L359.3 237.4 L358.3 237.7 L357.8 237.5 L357.5 236.5 Z"/>
<path stroke-width="0.55" d="M356.1 242.6 L356.0 240.0 M357.9 242.0 L357.9 239.3 M359.8 241.3 L359.8 238.6"/>
<path stroke-width="1.0" fill="#e6f5f8" d="M364.9 229.6 L371.1 227.4 L372.5 228.2 L375.2 235.6 L374.7 237.2 L368.5 239.4 L367.1 238.6 L364.4 231.2 Z"/>
<path stroke-width="0.8" fill="#c9e9ef" d="M367.7 232.1 L370.3 231.2 L371.3 231.7 L372.3 234.6 L371.9 235.7 L369.3 236.6 L368.3 236.1 L367.3 233.2 Z"/>
<path stroke-width="0.5" fill="#55bece" d="M369.2 233.3 L369.9 233.0 L370.2 233.2 L370.6 234.1 L370.4 234.5 L369.7 234.8 L369.4 234.6 L369.0 233.7 Z"/>
<path stroke-width="0.55" d="M368.3 238.9 L368.2 236.5 M369.7 238.4 L369.5 236.1 M371.0 237.9 L370.9 235.6"/>
<path stroke-width="1.0" fill="#e6f5f8" d="M331.6 239.9 L340.7 236.5 L342.7 237.4 L345.9 246.2 L345.0 248.1 L335.9 251.5 L333.9 250.6 L330.7 241.8 Z"/>
<path stroke-width="0.8" fill="#c9e9ef" d="M335.4 242.5 L339.2 241.1 L340.6 241.7 L341.9 245.1 L341.2 246.5 L337.4 247.9 L336.0 247.3 L334.7 243.9 Z"/>
<path stroke-width="0.5" fill="#55bece" d="M337.4 243.8 L338.5 243.4 L339.0 243.6 L339.4 244.7 L339.2 245.2 L338.1 245.6 L337.6 245.4 L337.2 244.3 Z"/>
<path stroke-width="0.55" d="M335.7 250.8 L335.7 248.0 M337.7 250.1 L337.7 247.3 M339.6 249.4 L339.6 246.5"/>
<path stroke-width="1.0" fill="#e6f5f8" d="M347.2 249.9 L357.7 246.1 L360.0 247.0 L363.5 256.8 L362.4 258.9 L351.9 262.7 L349.6 261.8 L346.1 252.0 Z"/>
<path stroke-width="0.8" fill="#c9e9ef" d="M351.5 252.7 L355.9 251.1 L357.5 251.8 L358.9 255.6 L358.1 257.1 L353.7 258.7 L352.1 258.0 L350.7 254.2 Z"/>
<path stroke-width="0.5" fill="#55bece" d="M353.8 254.1 L355.1 253.7 L355.6 253.9 L356.0 255.1 L355.8 255.7 L354.5 256.1 L354.0 255.9 L353.6 254.7 Z"/>
<path stroke-width="0.55" d="M351.7 262.0 L351.7 258.9 M354.0 261.2 L354.0 258.0 M356.3 260.3 L356.3 257.2"/>
<path stroke-width="1.0" fill="#e6f5f8" d="M367.0 244.4 L375.1 241.4 L377.0 242.4 L380.3 251.7 L379.6 253.6 L371.5 256.6 L369.6 255.6 L366.3 246.3 Z"/>
<path stroke-width="0.8" fill="#c9e9ef" d="M370.6 247.3 L374.0 246.1 L375.3 246.7 L376.6 250.3 L376.0 251.7 L372.6 252.9 L371.3 252.3 L370.0 248.7 Z"/>
<path stroke-width="0.5" fill="#55bece" d="M372.5 248.7 L373.4 248.4 L373.9 248.6 L374.3 249.8 L374.1 250.3 L373.2 250.6 L372.7 250.4 L372.3 249.2 Z"/>
<path stroke-width="0.55" d="M371.3 255.9 L371.1 253.0 M373.0 255.3 L372.9 252.3 M374.8 254.6 L374.6 251.7"/>
<path stroke-width="1.0" fill="#e6f5f8" d="M328.0 254.7 L336.6 251.5 L338.5 252.6 L342.0 262.3 L341.2 264.3 L332.6 267.5 L330.7 266.4 L327.2 256.7 Z"/>
<path stroke-width="0.8" fill="#c9e9ef" d="M331.7 257.7 L335.3 256.4 L336.7 257.1 L338.1 260.9 L337.5 262.3 L333.9 263.6 L332.5 262.9 L331.1 259.1 Z"/>
<path stroke-width="0.5" fill="#55bece" d="M333.7 259.2 L334.7 258.8 L335.2 259.1 L335.7 260.3 L335.5 260.8 L334.5 261.2 L334.0 260.9 L333.5 259.7 Z"/>
<path stroke-width="0.55" d="M332.5 266.8 L332.3 263.7 M334.3 266.1 L334.2 263.0 M336.2 265.4 L336.0 262.3"/>
<path stroke-width="1.0" fill="#e6f5f8" d="M358.8 263.1 L368.8 259.5 L370.9 260.4 L374.3 269.6 L373.2 271.7 L363.2 275.3 L361.1 274.4 L357.7 265.2 Z"/>
<path stroke-width="0.8" fill="#c9e9ef" d="M362.9 265.8 L367.1 264.3 L368.6 264.9 L369.9 268.5 L369.1 270.0 L364.9 271.5 L363.4 270.9 L362.1 267.3 Z"/>
<path stroke-width="0.5" fill="#55bece" d="M365.1 267.2 L366.2 266.7 L366.8 267.0 L367.2 268.1 L366.9 268.6 L365.8 269.1 L365.2 268.8 L364.8 267.7 Z"/>
<path stroke-width="0.55" d="M363.1 274.6 L363.1 271.7 M365.2 273.9 L365.3 270.9 M367.4 273.1 L367.4 270.1"/>
<path stroke-width="1.0" fill="#e6f5f8" d="M375.0 257.5 L380.2 255.5 L381.5 256.6 L384.6 264.9 L384.2 266.5 L379.0 268.5 L377.7 267.4 L374.6 259.1 Z"/>
<path stroke-width="0.8" fill="#c9e9ef" d="M377.6 260.4 L379.8 259.6 L380.7 260.3 L381.9 263.5 L381.6 264.6 L379.4 265.4 L378.5 264.7 L377.3 261.5 Z"/>
<path stroke-width="0.5" fill="#55bece" d="M379.0 261.8 L379.6 261.5 L379.9 261.8 L380.3 262.8 L380.2 263.2 L379.6 263.5 L379.3 263.2 L378.9 262.2 Z"/>
<path stroke-width="0.55" d="M378.8 267.8 L378.5 265.3 M379.9 267.4 L379.6 264.9 M381.1 267.0 L380.7 264.5"/>
<path stroke-width="1.0" fill="#e6f5f8" d="M340.4 268.6 L350.0 265.2 L352.0 266.1 L355.4 275.4 L354.4 277.4 L344.8 280.8 L342.8 279.9 L339.4 270.6 Z"/>
<path stroke-width="0.8" fill="#c9e9ef" d="M344.4 271.4 L348.4 270.0 L349.8 270.6 L351.2 274.2 L350.4 275.6 L346.4 277.0 L345.0 276.4 L343.6 272.8 Z"/>
<path stroke-width="0.5" fill="#55bece" d="M346.5 272.8 L347.6 272.4 L348.1 272.6 L348.5 273.7 L348.3 274.2 L347.2 274.6 L346.7 274.4 L346.3 273.3 Z"/>
<path stroke-width="0.55" d="M344.7 280.2 L344.7 277.2 M346.8 279.4 L346.7 276.4 M348.8 278.7 L348.8 275.7"/>
<path stroke-width="1.0" fill="#e6f5f8" d="M353.1 276.8 L362.1 273.4 L364.1 274.2 L367.1 282.6 L366.1 284.4 L357.1 287.8 L355.1 287.0 L352.1 278.6 Z"/>
<path stroke-width="0.8" fill="#c9e9ef" d="M356.8 279.2 L360.6 277.9 L362.0 278.4 L363.1 281.7 L362.4 283.0 L358.6 284.3 L357.2 283.8 L356.1 280.5 Z"/>
<path stroke-width="0.5" fill="#55bece" d="M358.8 280.4 L359.8 280.1 L360.3 280.3 L360.7 281.3 L360.4 281.8 L359.4 282.1 L358.9 281.9 L358.5 280.9 Z"/>
<path stroke-width="0.55" d="M356.9 287.1 L357.0 284.4 M358.9 286.4 L358.9 283.7 M360.8 285.7 L360.9 283.0"/>
<path stroke-width="1.0" fill="#e6f5f8" d="M368.5 270.7 L376.1 267.9 L377.8 268.8 L380.9 277.1 L380.1 278.9 L372.5 281.7 L370.8 280.8 L367.7 272.5 Z"/>
<path stroke-width="0.8" fill="#c9e9ef" d="M371.8 273.3 L375.0 272.2 L376.2 272.8 L377.4 276.0 L376.8 277.3 L373.6 278.4 L372.4 277.8 L371.2 274.6 Z"/>
<path stroke-width="0.5" fill="#55bece" d="M373.5 274.6 L374.4 274.3 L374.9 274.5 L375.2 275.5 L375.1 276.0 L374.2 276.3 L373.7 276.1 L373.4 275.1 Z"/>
<path stroke-width="0.55" d="M372.3 281.1 L372.2 278.4 M374.0 280.5 L373.9 277.8 M375.6 279.9 L375.5 277.2"/>
<path stroke-width="1.0" fill="#e6f5f8" d="M329.6 272.3 L334.9 270.4 L336.1 271.1 L338.4 277.6 L338.0 278.9 L332.7 280.8 L331.5 280.1 L329.2 273.6 Z"/>
<path stroke-width="0.8" fill="#c9e9ef" d="M332.0 274.5 L334.2 273.7 L335.0 274.2 L336.0 276.7 L335.6 277.7 L333.4 278.5 L332.6 278.0 L331.6 275.5 Z"/>
<path stroke-width="0.5" fill="#55bece" d="M333.3 275.6 L333.9 275.3 L334.2 275.5 L334.5 276.3 L334.3 276.6 L333.7 276.9 L333.4 276.7 L333.1 275.9 Z"/>
<path stroke-width="0.55" d="M332.6 280.4 L332.5 278.3 M333.7 279.9 L333.6 277.9 M334.9 279.5 L334.7 277.5"/>
<path stroke-width="1.0" fill="#e6f5f8" d="M338.0 281.2 L344.7 278.8 L346.1 279.4 L348.3 285.4 L347.6 286.8 L340.9 289.2 L339.5 288.6 L337.3 282.6 Z"/>
<path stroke-width="0.8" fill="#c9e9ef" d="M340.7 283.2 L343.5 282.2 L344.5 282.5 L345.4 284.9 L344.9 285.8 L342.1 286.8 L341.1 286.5 L340.2 284.1 Z"/>
<path stroke-width="0.5" fill="#55bece" d="M342.2 284.0 L343.0 283.7 L343.3 283.9 L343.6 284.6 L343.4 285.0 L342.6 285.3 L342.3 285.1 L342.0 284.4 Z"/>
<path stroke-width="0.55" d="M340.8 288.7 L340.8 286.8 M342.2 288.2 L342.3 286.3 M343.7 287.7 L343.7 285.7"/>
<path stroke-width="1.0" fill="#e6f5f8" d="M347.3 287.0 L354.0 284.5 L355.4 285.0 L357.4 290.6 L356.7 291.8 L350.0 294.3 L348.6 293.8 L346.6 288.2 Z"/>
<path stroke-width="0.8" fill="#c9e9ef" d="M350.0 288.7 L352.8 287.7 L353.8 288.0 L354.6 290.2 L354.0 291.1 L351.2 292.1 L350.2 291.8 L349.4 289.6 Z"/>
<path stroke-width="0.5" fill="#55bece" d="M351.4 289.5 L352.2 289.2 L352.5 289.3 L352.8 290.0 L352.6 290.3 L351.8 290.6 L351.5 290.5 L351.2 289.8 Z"/>
<path stroke-width="0.55" d="M349.9 293.9 L350.0 292.0 M351.3 293.3 L351.4 291.5 M352.8 292.8 L352.9 291.0"/>
<path stroke-width="1.0" fill="#e6f5f8" d="M361.8 284.1 L368.9 281.5 L370.4 282.1 L372.6 288.1 L371.8 289.5 L364.7 292.1 L363.2 291.5 L361.0 285.5 Z"/>
<path stroke-width="0.8" fill="#c9e9ef" d="M364.6 286.0 L367.6 284.9 L368.7 285.3 L369.6 287.6 L369.0 288.6 L366.0 289.7 L364.9 289.3 L364.0 287.0 Z"/>
<path stroke-width="0.5" fill="#55bece" d="M366.2 286.8 L367.0 286.5 L367.4 286.7 L367.6 287.4 L367.4 287.8 L366.6 288.1 L366.2 287.9 L366.0 287.2 Z"/>
<path stroke-width="0.55" d="M364.6 291.6 L364.6 289.7 M366.1 291.1 L366.2 289.1 M367.7 290.5 L367.7 288.5"/>
<path stroke-width="2.2" d="M366 292 Q367.5 299 371.8 301.8"/>
<path stroke-width="0.9" fill="#55bece" fill-opacity="0.55" d="M311.7 290.0 L321.7 295.6 L327.0 302.0 L336.0 306.7 L340.6 317.8 L346.0 327.8 L348.3 337.8 L352.8 346.7 L349.4 355.6 L347.0 364.4 L339.4 373.0 L328.3 380.0 L315.0 384.0 L301.7 381.0 L288.3 373.0 L277.0 364.4 L271.7 355.6 L268.3 344.4 L270.6 333.0 L271.7 325.6 L281.7 322.0 L284.0 313.0 L295.0 311.0 L297.0 304.4 L305.0 302.0 L305.0 292.0 Z"/>
<path stroke-width="0.6" d="M317.4 344.5 L326.0 361.2 M306.7 334.8 L287.7 337.7 M315.1 324.7 L320.4 308.5 M312.3 337.5 L313.4 352.6 M308.8 331.8 L292.3 320.6 M312.6 340.4 L313.6 350.2 M323.1 333.8 L343.4 333.4 M309.5 331.4 L300.1 321.8 M307.7 334.1 L286.4 334.5 M308.8 338.0 L295.6 354.4 M321.3 344.7 L331.5 356.4 M305.6 331.5 L291.6 326.0 M313.3 337.6 L321.1 359.0 M313.1 347.3 L314.1 359.8 M324.6 331.1 L342.8 327.0 M312.8 323.2 L314.2 302.4 M317.9 340.6 L332.0 356.3 M316.0 348.4 L322.2 370.8 M306.1 338.3 L294.0 347.2 M301.5 344.5 L291.4 354.7 M316.0 334.8 L333.8 338.3 M320.4 333.6 L335.3 332.8 M301.3 330.0 L290.8 326.0 M304.9 327.4 L292.0 315.2 M314.1 339.1 L319.5 352.5 M318.1 330.5 L332.8 322.2 M310.6 338.5 L307.5 348.1 M316.5 321.8 L321.7 307.7 M307.8 323.0 L299.4 301.4 M319.2 331.8 L340.3 325.3 M321.2 331.4 L341.0 325.8 M304.9 334.5 L293.4 335.2 M315.4 330.1 L321.8 322.9 M315.9 321.6 L320.9 305.6 M313.9 330.5 L319.9 319.1 M310.1 342.5 L307.5 354.1 M318.1 337.3 L336.7 347.3 M323.1 332.7 L337.8 330.9 M311.8 349.6 L311.6 367.2 M311.6 330.2 L310.1 317.7 M318.2 322.5 L328.9 302.6 M305.8 328.7 L292.8 317.7 M315.7 328.0 L324.8 313.6 M310.1 347.0 L308.8 356.2 M306.7 319.7 L303.4 310.9 M303.6 327.6 L287.0 314.8 M307.0 330.6 L295.2 322.7 M324.5 330.2 L334.1 327.3 M315.3 336.6 L322.3 342.0 M307.7 335.7 L288.7 343.3 M309.5 329.8 L300.8 315.0 M308.2 342.7 L303.2 354.0 M314.5 339.0 L321.2 352.2 M309.7 323.9 L307.6 314.3 M312.8 330.6 L316.4 314.4 M322.5 339.1 L332.1 343.8 M310.6 327.5 L306.4 307.7 M310.7 337.7 L305.4 351.9 M307.3 347.8 L302.9 360.8 M303.0 333.8 L281.7 333.3 M319.8 340.4 L332.1 350.5 M310.7 318.4 L309.5 304.3 M309.3 324.4 L304.3 307.1 M323.0 339.4 L343.0 349.1 M308.0 339.9 L294.6 359.8 M315.0 336.8 L322.0 343.3 M316.5 322.0 L322.1 306.9 M309.7 331.4 L297.4 317.9 M303.9 337.5 L291.3 343.0 M307.5 337.7 L300.5 343.4 M306.8 336.7 L290.4 344.9 M316.5 322.5 L322.4 307.4 M312.6 342.3 L313.9 359.3 M302.8 322.5 L296.6 314.7 M303.7 335.2 L285.8 337.9 M320.9 325.5 L333.9 313.3 M308.7 322.5 L305.1 310.0 M318.3 329.8 L332.7 320.3 M318.4 334.3 L330.8 334.9 M308.4 337.3 L296.2 348.8 M317.6 337.5 L336.2 349.2 M311.6 324.7 L311.2 313.8 M322.3 330.6 L332.8 327.2 M306.9 343.9 L297.9 361.3 M311.1 349.4 L310.2 363.8 M311.7 348.1 L311.4 359.8 M309.8 328.6 L303.0 311.5 M310.8 342.1 L307.1 366.1 M304.4 335.8 L288.1 339.8 M311.1 339.6 L308.5 354.7 M311.3 339.8 L308.3 364.2 M323.6 336.9 L344.2 342.1 M311.1 330.5 L306.9 313.9 M321.4 336.7 L338.7 341.7 M312.2 337.5 L313.1 355.5 M317.3 338.1 L329.2 347.4 M317.6 329.0 L325.4 322.0 M315.1 320.6 L319.1 303.5 M316.8 335.8 L329.8 340.5 M306.8 332.0 L288.6 324.9 M319.3 321.4 L330.6 301.9 M321.3 335.2 L330.4 336.4 M321.1 326.4 L336.1 313.8 M313.4 337.9 L320.7 358.6 M304.3 327.0 L292.8 316.6 M314.1 326.7 L317.7 313.8 M308.2 339.8 L298.1 355.1 M314.9 331.2 L321.8 324.7 M301.6 333.1 L290.9 332.2 M311.5 338.2 L310.5 347.9 M301.5 334.4 L284.4 335.0 M314.3 338.0 L325.7 358.3 M304.7 331.9 L287.6 327.1 M310.8 324.0 L309.5 313.7 M314.5 328.6 L318.5 319.8 M306.7 342.2 L296.6 357.6 M317.0 345.0 L323.8 360.3 M318.5 346.1 L328.6 365.0 M320.7 327.3 L329.9 320.3 M314.2 319.4 L316.9 301.8 M323.5 325.4 L334.8 317.0 M324.4 328.5 L342.3 320.7 M318.9 334.6 L335.4 335.9 M303.2 325.9 L289.8 313.7 M319.0 346.9 L327.2 362.1 M315.9 329.9 L332.1 312.8 M301.1 329.5 L283.9 322.4 M317.2 328.6 L324.0 321.5 M307.9 337.2 L295.0 347.2 M314.8 326.6 L318.7 316.2 M319.5 335.5 L335.4 338.6 M322.2 336.0 L333.0 338.0 M322.3 343.5 L334.3 354.4 M318.8 327.9 L326.5 321.1 M312.5 342.8 L313.5 362.3 M313.5 321.2 L315.7 301.6 M311.9 342.9 L311.6 358.2 M306.1 334.4 L290.6 335.6 M308.7 335.0 L289.9 340.7 M301.9 327.0 L286.2 316.1 M310.3 318.1 L308.7 302.9 M309.6 336.2 L296.0 348.5 M303.9 328.7 L284.7 316.4 M313.8 340.0 L319.8 359.8 M315.2 325.2 L318.5 315.8 M303.7 344.1 L293.4 356.7 M304.9 336.0 L288.6 340.6"/>
<path stroke-width="0.8" fill="#a5dae3" d="M322.8 297.3 L318.7 309.3 L317.2 296.7 Z"/>
<path stroke-width="0.9" fill="#f4fbfc" d="M322.8 297.3 L320.6 291.6 L317.2 296.7 L319.4 302.4 Z"/>
<path stroke-width="0.55" d="M321.4 297.2 L320.1 295.8 L318.6 296.8"/>
<path stroke-width="0.5" d="M321.8 300.3 L319.5 301.6 M320.7 303.3 L319.2 304.6 M319.7 306.3 L318.8 307.7"/>
<path stroke-width="0.8" fill="#a5dae3" d="M309.3 296.8 L307.4 309.3 L303.7 297.2 Z"/>
<path stroke-width="0.9" fill="#f4fbfc" d="M309.3 296.8 L306.1 291.6 L303.7 297.2 L306.9 302.4 Z"/>
<path stroke-width="0.55" d="M307.9 296.9 L306.4 295.8 L305.1 297.1"/>
<path stroke-width="0.5" d="M308.8 299.9 L306.8 301.6 M308.4 303.1 L307.1 304.7 M307.9 306.2 L307.3 307.7"/>
<path stroke-width="0.8" fill="#a5dae3" d="M316.1 297.0 L312.8 310.7 L309.9 297.0 Z"/>
<path stroke-width="0.9" fill="#f4fbfc" d="M316.1 297.0 L313.1 291.0 L309.9 297.0 L312.9 303.0 Z"/>
<path stroke-width="0.55" d="M314.5 297.0 L313.0 295.7 L311.5 297.0"/>
<path stroke-width="0.5" d="M315.3 300.5 L312.9 302.1 M314.4 303.9 L312.9 305.5 M313.6 307.3 L312.8 309.0"/>
<path stroke-width="0.8" fill="#a5dae3" d="M335.7 308.2 L328.7 316.8 L328.3 305.8 Z"/>
<path stroke-width="0.9" fill="#f4fbfc" d="M335.7 308.2 L333.4 302.7 L328.3 305.8 L330.6 311.3 Z"/>
<path stroke-width="0.55" d="M333.9 307.6 L332.3 306.1 L330.1 306.4"/>
<path stroke-width="0.5" d="M334.0 310.4 L330.8 310.6 M332.2 312.5 L330.0 313.1 M330.5 314.6 L329.2 315.5"/>
<path stroke-width="0.8" fill="#a5dae3" d="M303.3 306.2 L301.7 317.8 L295.7 307.8 Z"/>
<path stroke-width="0.9" fill="#f4fbfc" d="M303.3 306.2 L298.5 302.3 L295.7 307.8 L300.5 311.7 Z"/>
<path stroke-width="0.55" d="M301.4 306.6 L299.3 306.0 L297.6 307.4"/>
<path stroke-width="0.5" d="M302.9 309.1 L300.3 311.0 M302.5 312.0 L300.9 313.7 M302.1 314.9 L301.5 316.4"/>
<path stroke-width="0.8" fill="#a5dae3" d="M326.9 307.8 L320.5 318.5 L318.1 306.2 Z"/>
<path stroke-width="0.9" fill="#f4fbfc" d="M326.9 307.8 L323.4 301.9 L318.1 306.2 L321.6 312.1 Z"/>
<path stroke-width="0.55" d="M324.7 307.4 L322.7 305.9 L320.3 306.6"/>
<path stroke-width="0.5" d="M325.3 310.5 L321.8 311.3 M323.7 313.1 L321.3 314.1 M322.1 315.8 L320.7 317.0"/>
<path stroke-width="0.8" fill="#a5dae3" d="M316.0 306.9 L311.2 320.7 L306.0 307.1 Z"/>
<path stroke-width="0.9" fill="#f4fbfc" d="M316.0 306.9 L310.9 301.0 L306.0 307.1 L311.1 313.0 Z"/>
<path stroke-width="0.55" d="M313.5 307.0 L311.0 305.7 L308.5 307.0"/>
<path stroke-width="0.5" d="M314.8 310.4 L311.1 312.1 M313.6 313.8 L311.1 315.5 M312.4 317.3 L311.2 319.0"/>
<path stroke-width="0.8" fill="#a5dae3" d="M341.6 320.6 L332.8 327.4 L334.4 316.4 Z"/>
<path stroke-width="0.9" fill="#f4fbfc" d="M341.6 320.6 L340.3 314.6 L334.4 316.4 L335.7 322.4 Z"/>
<path stroke-width="0.55" d="M339.8 319.6 L338.5 317.6 L336.2 317.4"/>
<path stroke-width="0.5" d="M339.4 322.3 L336.1 321.8 M337.2 324.0 L334.8 324.0 M335.0 325.7 L333.5 326.3"/>
<path stroke-width="0.8" fill="#a5dae3" d="M292.5 316.4 L293.3 327.6 L284.5 320.6 Z"/>
<path stroke-width="0.9" fill="#f4fbfc" d="M292.5 316.4 L286.4 314.5 L284.5 320.6 L290.6 322.5 Z"/>
<path stroke-width="0.55" d="M290.5 317.5 L288.0 317.6 L286.5 319.5"/>
<path stroke-width="0.5" d="M292.7 319.2 L290.3 321.9 M292.9 322.0 L291.5 324.2 M293.1 324.8 L292.7 326.4"/>
<path stroke-width="0.8" fill="#a5dae3" d="M332.5 320.2 L323.7 329.5 L322.5 316.8 Z"/>
<path stroke-width="0.9" fill="#f4fbfc" d="M332.5 320.2 L329.2 313.6 L322.5 316.8 L325.8 323.4 Z"/>
<path stroke-width="0.55" d="M330.0 319.4 L327.9 317.4 L325.0 317.6"/>
<path stroke-width="0.5" d="M330.3 322.6 L326.1 322.6 M328.1 324.9 L325.1 325.3 M325.9 327.2 L324.2 328.1"/>
<path stroke-width="0.8" fill="#a5dae3" d="M304.6 317.3 L302.9 329.1 L295.4 319.7 Z"/>
<path stroke-width="0.9" fill="#f4fbfc" d="M304.6 317.3 L298.7 313.8 L295.4 319.7 L301.3 323.2 Z"/>
<path stroke-width="0.55" d="M302.3 317.9 L299.7 317.5 L297.7 319.1"/>
<path stroke-width="0.5" d="M304.2 320.2 L301.1 322.4 M303.7 323.2 L301.8 325.1 M303.3 326.2 L302.5 327.7"/>
<path stroke-width="0.8" fill="#a5dae3" d="M320.2 318.8 L313.4 332.2 L307.8 318.2 Z"/>
<path stroke-width="0.9" fill="#f4fbfc" d="M320.2 318.8 L314.3 312.5 L307.8 318.2 L313.7 324.5 Z"/>
<path stroke-width="0.55" d="M317.1 318.6 L314.1 317.2 L310.9 318.4"/>
<path stroke-width="0.5" d="M318.5 322.1 L313.8 323.6 M316.8 325.5 L313.6 327.0 M315.1 328.9 L313.5 330.5"/>
<path stroke-width="0.8" fill="#a5dae3" d="M280.7 326.6 L286.0 337.5 L274.3 334.4 Z"/>
<path stroke-width="0.9" fill="#f4fbfc" d="M280.7 326.6 L273.8 327.4 L274.3 334.4 L281.2 333.6 Z"/>
<path stroke-width="0.55" d="M279.1 328.6 L276.7 329.8 L275.9 332.4"/>
<path stroke-width="0.5" d="M282.0 329.4 L280.6 333.1 M283.3 332.1 L282.7 334.9 M284.7 334.8 L284.9 336.6"/>
<path stroke-width="0.8" fill="#a5dae3" d="M346.5 333.8 L335.9 337.4 L340.5 327.2 Z"/>
<path stroke-width="0.9" fill="#f4fbfc" d="M346.5 333.8 L346.9 327.4 L340.5 327.2 L340.1 333.6 Z"/>
<path stroke-width="0.55" d="M345.0 332.2 L344.2 329.8 L342.0 328.8"/>
<path stroke-width="0.5" d="M343.9 334.7 L340.7 333.1 M341.2 335.6 L338.8 334.8 M338.5 336.5 L336.9 336.5"/>
<path stroke-width="0.8" fill="#a5dae3" d="M295.0 327.1 L297.5 339.9 L286.0 333.9 Z"/>
<path stroke-width="0.9" fill="#f4fbfc" d="M295.0 327.1 L287.4 326.4 L286.0 333.9 L293.6 334.6 Z"/>
<path stroke-width="0.55" d="M292.7 328.8 L289.8 329.6 L288.3 332.2"/>
<path stroke-width="0.5" d="M295.6 330.3 L293.1 334.0 M296.2 333.5 L294.8 336.3 M296.9 336.7 L296.6 338.6"/>
<path stroke-width="0.8" fill="#a5dae3" d="M337.1 333.8 L325.7 340.0 L327.9 327.2 Z"/>
<path stroke-width="0.9" fill="#f4fbfc" d="M337.1 333.8 L335.5 326.3 L327.9 327.2 L329.5 334.7 Z"/>
<path stroke-width="0.55" d="M334.8 332.1 L333.2 329.6 L330.2 328.9"/>
<path stroke-width="0.5" d="M334.2 335.3 L330.0 334.0 M331.4 336.9 L328.3 336.4 M328.5 338.4 L326.6 338.8"/>
<path stroke-width="0.8" fill="#a5dae3" d="M311.0 328.8 L307.6 342.3 L298.0 332.2 Z"/>
<path stroke-width="0.9" fill="#f4fbfc" d="M311.0 328.8 L303.0 324.6 L298.0 332.2 L306.0 336.4 Z"/>
<path stroke-width="0.55" d="M307.8 329.6 L304.2 329.2 L301.2 331.4"/>
<path stroke-width="0.5" d="M310.1 332.2 L305.6 334.9 M309.3 335.6 L306.4 337.8 M308.4 338.9 L307.2 340.8"/>
<path stroke-width="0.8" fill="#a5dae3" d="M324.7 331.9 L316.1 342.3 L313.3 329.1 Z"/>
<path stroke-width="0.9" fill="#f4fbfc" d="M324.7 331.9 L320.3 325.2 L313.3 329.1 L317.7 335.8 Z"/>
<path stroke-width="0.55" d="M321.9 331.2 L319.3 329.3 L316.1 329.8"/>
<path stroke-width="0.5" d="M322.6 334.5 L317.9 334.9 M320.4 337.1 L317.2 337.8 M318.3 339.7 L316.5 340.8"/>
<path stroke-width="0.8" fill="#a5dae3" d="M346.3 344.3 L345.8 335.9 L352.7 340.7 Z"/>
<path stroke-width="0.9" fill="#f4fbfc" d="M346.3 344.3 L351.7 346.5 L352.7 340.7 L347.3 338.5 Z"/>
<path stroke-width="0.55" d="M347.9 343.4 L350.0 343.4 L351.1 341.6"/>
<path stroke-width="0.5" d="M346.2 342.2 L348.1 340.1 M346.1 340.1 L347.2 338.4 M345.9 338.0 L346.3 336.8"/>
<path stroke-width="0.8" fill="#a5dae3" d="M270.6 340.1 L278.7 335.9 L279.4 344.9 Z"/>
<path stroke-width="0.9" fill="#f4fbfc" d="M270.6 340.1 L272.7 346.7 L279.4 344.9 L277.3 338.3 Z"/>
<path stroke-width="0.55" d="M272.8 341.3 L274.5 343.4 L277.2 343.7"/>
<path stroke-width="0.5" d="M272.6 339.0 L276.4 340.1 M274.6 338.0 L277.3 338.4 M276.6 336.9 L278.2 336.8"/>
<path stroke-width="0.8" fill="#a5dae3" d="M335.9 344.7 L338.1 335.9 L346.1 340.3 Z"/>
<path stroke-width="0.9" fill="#f4fbfc" d="M335.9 344.7 L343.1 347.2 L346.1 340.3 L338.9 337.8 Z"/>
<path stroke-width="0.55" d="M338.4 343.6 L341.4 343.5 L343.6 341.4"/>
<path stroke-width="0.5" d="M336.4 342.5 L339.9 340.1 M337.0 340.3 L339.2 338.4 M337.6 338.1 L338.5 336.8"/>
<path stroke-width="0.8" fill="#a5dae3" d="M281.7 340.4 L289.9 335.9 L293.3 344.6 Z"/>
<path stroke-width="0.9" fill="#f4fbfc" d="M281.7 340.4 L285.7 347.3 L293.3 344.6 L289.3 337.7 Z"/>
<path stroke-width="0.55" d="M284.6 341.4 L287.1 343.6 L290.4 343.6"/>
<path stroke-width="0.5" d="M283.8 339.3 L288.4 340.1 M285.8 338.1 L289.0 338.4 M287.9 337.0 L289.6 336.8"/>
<path stroke-width="0.8" fill="#a5dae3" d="M322.5 344.0 L326.9 335.9 L334.5 341.0 Z"/>
<path stroke-width="0.9" fill="#f4fbfc" d="M322.5 344.0 L329.8 347.8 L334.5 341.0 L327.2 337.2 Z"/>
<path stroke-width="0.55" d="M325.5 343.2 L328.8 343.7 L331.5 341.8"/>
<path stroke-width="0.5" d="M323.6 342.0 L327.9 340.1 M324.7 339.9 L327.5 338.4 M325.8 337.9 L327.1 336.8"/>
<path stroke-width="0.8" fill="#a5dae3" d="M293.9 341.4 L301.6 335.9 L307.1 343.6 Z"/>
<path stroke-width="0.9" fill="#f4fbfc" d="M293.9 341.4 L299.5 348.2 L307.1 343.6 L301.5 336.8 Z"/>
<path stroke-width="0.55" d="M297.2 341.9 L300.3 343.7 L303.8 343.1"/>
<path stroke-width="0.5" d="M295.8 340.0 L300.9 340.1 M297.8 338.6 L301.2 338.4 M299.7 337.3 L301.5 336.8"/>
<path stroke-width="0.8" fill="#a5dae3" d="M307.8 342.8 L314.3 335.9 L321.2 342.2 Z"/>
<path stroke-width="0.9" fill="#f4fbfc" d="M307.8 342.8 L314.7 348.2 L321.2 342.2 L314.3 336.8 Z"/>
<path stroke-width="0.55" d="M311.1 342.6 L314.5 343.8 L317.9 342.4"/>
<path stroke-width="0.5" d="M309.4 341.0 L314.4 340.1 M311.0 339.3 L314.3 338.4 M312.6 337.6 L314.3 336.8"/>
<path stroke-width="0.8" fill="#a5dae3" d="M274.5 351.0 L282.7 346.9 L284.5 356.0 Z"/>
<path stroke-width="0.9" fill="#f4fbfc" d="M274.5 351.0 L277.4 357.9 L284.5 356.0 L281.6 349.1 Z"/>
<path stroke-width="0.55" d="M277.0 352.3 L279.0 354.4 L282.0 354.7"/>
<path stroke-width="0.5" d="M276.5 350.0 L280.7 351.1 M278.6 349.0 L281.5 349.4 M280.7 347.9 L282.3 347.8"/>
<path stroke-width="0.8" fill="#a5dae3" d="M337.1 355.7 L339.0 346.9 L346.9 351.3 Z"/>
<path stroke-width="0.9" fill="#f4fbfc" d="M337.1 355.7 L344.0 357.9 L346.9 351.3 L340.0 349.1 Z"/>
<path stroke-width="0.55" d="M339.6 354.6 L342.4 354.5 L344.4 352.4"/>
<path stroke-width="0.5" d="M337.6 353.5 L340.9 351.1 M338.1 351.3 L340.2 349.4 M338.6 349.1 L339.4 347.8"/>
<path stroke-width="0.8" fill="#a5dae3" d="M285.6 351.7 L293.5 346.9 L297.4 355.3 Z"/>
<path stroke-width="0.9" fill="#f4fbfc" d="M285.6 351.7 L290.0 358.4 L297.4 355.3 L293.0 348.6 Z"/>
<path stroke-width="0.55" d="M288.6 352.6 L291.2 354.6 L294.4 354.4"/>
<path stroke-width="0.5" d="M287.6 350.5 L292.3 351.1 M289.6 349.3 L292.8 349.4 M291.6 348.1 L293.3 347.8"/>
<path stroke-width="0.8" fill="#a5dae3" d="M324.6 355.1 L328.7 346.9 L336.4 351.9 Z"/>
<path stroke-width="0.9" fill="#f4fbfc" d="M324.6 355.1 L331.9 358.5 L336.4 351.9 L329.1 348.5 Z"/>
<path stroke-width="0.55" d="M327.5 354.3 L330.8 354.6 L333.5 352.7"/>
<path stroke-width="0.5" d="M325.6 353.1 L329.8 351.1 M326.6 351.0 L329.4 349.4 M327.6 349.0 L328.9 347.8"/>
<path stroke-width="0.8" fill="#a5dae3" d="M297.8 352.7 L305.2 346.9 L311.2 354.3 Z"/>
<path stroke-width="0.9" fill="#f4fbfc" d="M297.8 352.7 L303.9 358.9 L311.2 354.3 L305.1 348.1 Z"/>
<path stroke-width="0.55" d="M301.2 353.1 L304.4 354.7 L307.8 353.9"/>
<path stroke-width="0.5" d="M299.7 351.3 L304.8 351.1 M301.5 349.8 L305.0 349.4 M303.4 348.4 L305.1 347.8"/>
<path stroke-width="0.8" fill="#a5dae3" d="M310.8 354.1 L317.0 346.9 L324.2 352.9 Z"/>
<path stroke-width="0.9" fill="#f4fbfc" d="M310.8 354.1 L317.9 358.9 L324.2 352.9 L317.1 348.1 Z"/>
<path stroke-width="0.55" d="M314.2 353.8 L317.6 354.7 L320.8 353.2"/>
<path stroke-width="0.5" d="M312.3 352.3 L317.3 351.1 M313.9 350.5 L317.2 349.4 M315.4 348.7 L317.0 347.8"/>
<path stroke-width="0.8" fill="#a5dae3" d="M280.3 361.4 L288.1 356.9 L290.7 365.6 Z"/>
<path stroke-width="0.9" fill="#f4fbfc" d="M280.3 361.4 L283.8 367.7 L290.7 365.6 L287.2 359.3 Z"/>
<path stroke-width="0.55" d="M282.9 362.5 L285.1 364.4 L288.1 364.5"/>
<path stroke-width="0.5" d="M282.3 360.3 L286.5 361.1 M284.2 359.2 L287.1 359.4 M286.2 358.0 L287.8 357.8"/>
<path stroke-width="0.8" fill="#a5dae3" d="M330.2 365.4 L333.2 356.9 L340.8 361.6 Z"/>
<path stroke-width="0.9" fill="#f4fbfc" d="M330.2 365.4 L337.0 367.8 L340.8 361.6 L334.0 359.2 Z"/>
<path stroke-width="0.55" d="M332.9 364.4 L335.8 364.4 L338.1 362.6"/>
<path stroke-width="0.5" d="M331.0 363.2 L334.6 361.1 M331.7 361.1 L334.1 359.4 M332.4 359.0 L333.5 357.8"/>
<path stroke-width="0.8" fill="#a5dae3" d="M291.5 362.2 L298.9 356.9 L303.5 364.8 Z"/>
<path stroke-width="0.9" fill="#f4fbfc" d="M291.5 362.2 L296.5 368.2 L303.5 364.8 L298.5 358.8 Z"/>
<path stroke-width="0.55" d="M294.5 362.8 L297.3 364.5 L300.5 364.2"/>
<path stroke-width="0.5" d="M293.3 360.9 L298.0 361.1 M295.2 359.5 L298.4 359.4 M297.1 358.2 L298.7 357.8"/>
<path stroke-width="0.8" fill="#a5dae3" d="M317.4 364.5 L322.4 356.9 L329.6 362.5 Z"/>
<path stroke-width="0.9" fill="#f4fbfc" d="M317.4 364.5 L324.3 368.3 L329.6 362.5 L322.7 358.7 Z"/>
<path stroke-width="0.55" d="M320.5 364.0 L323.7 364.5 L326.5 363.0"/>
<path stroke-width="0.5" d="M318.7 362.6 L323.1 361.1 M319.9 360.7 L322.8 359.4 M321.1 358.8 L322.5 357.8"/>
<path stroke-width="0.8" fill="#a5dae3" d="M303.8 363.3 L310.6 356.9 L317.2 363.7 Z"/>
<path stroke-width="0.9" fill="#f4fbfc" d="M303.8 363.3 L310.4 368.6 L317.2 363.7 L310.6 358.4 Z"/>
<path stroke-width="0.55" d="M307.1 363.4 L310.5 364.6 L313.9 363.6"/>
<path stroke-width="0.5" d="M305.5 361.7 L310.6 361.1 M307.2 360.1 L310.6 359.4 M308.9 358.5 L310.6 357.8"/>
<path stroke-width="0.8" fill="#a5dae3" d="M288.1 370.8 L295.3 365.7 L298.9 373.8 Z"/>
<path stroke-width="0.9" fill="#f4fbfc" d="M288.1 370.8 L292.4 376.4 L298.9 373.8 L294.6 368.2 Z"/>
<path stroke-width="0.55" d="M290.8 371.6 L293.3 373.2 L296.2 373.0"/>
<path stroke-width="0.5" d="M289.9 369.5 L294.2 369.9 M291.7 368.3 L294.6 368.2 M293.5 367.0 L295.1 366.6"/>
<path stroke-width="0.8" fill="#a5dae3" d="M324.4 373.7 L327.8 365.7 L334.6 370.9 Z"/>
<path stroke-width="0.9" fill="#f4fbfc" d="M324.4 373.7 L330.6 376.4 L334.6 370.9 L328.4 368.2 Z"/>
<path stroke-width="0.55" d="M326.9 373.0 L329.7 373.2 L332.1 371.6"/>
<path stroke-width="0.5" d="M325.2 371.7 L328.9 369.9 M326.1 369.7 L328.4 368.2 M326.9 367.7 L328.0 366.6"/>
<path stroke-width="0.8" fill="#a5dae3" d="M299.4 371.7 L306.1 365.7 L311.6 372.9 Z"/>
<path stroke-width="0.9" fill="#f4fbfc" d="M299.4 371.7 L305.1 376.8 L311.6 372.9 L305.9 367.8 Z"/>
<path stroke-width="0.55" d="M302.4 372.0 L305.4 373.3 L308.6 372.6"/>
<path stroke-width="0.5" d="M301.1 370.2 L305.7 369.9 M302.8 368.7 L305.9 368.2 M304.4 367.2 L306.1 366.6"/>
<path stroke-width="0.8" fill="#a5dae3" d="M311.9 372.9 L317.4 365.7 L324.1 371.7 Z"/>
<path stroke-width="0.9" fill="#f4fbfc" d="M311.9 372.9 L318.4 376.8 L324.1 371.7 L317.6 367.8 Z"/>
<path stroke-width="0.55" d="M314.9 372.6 L318.1 373.3 L321.1 372.0"/>
<path stroke-width="0.5" d="M313.3 371.1 L317.8 369.9 M314.6 369.3 L317.6 368.2 M316.0 367.5 L317.5 366.6"/>
<path stroke-width="0.8" fill="#a5dae3" d="M319.6 380.0 L322.8 372.6 L328.4 378.4 Z"/>
<path stroke-width="0.9" fill="#f4fbfc" d="M319.6 380.0 L324.6 382.5 L328.4 378.4 L323.4 375.9 Z"/>
<path stroke-width="0.55" d="M321.8 379.6 L324.1 379.9 L326.2 378.8"/>
<path stroke-width="0.5" d="M320.4 378.1 L323.6 376.8 M321.2 376.3 L323.3 375.1 M322.0 374.4 L323.0 373.5"/>
<path stroke-width="0.8" fill="#a5dae3" d="M298.5 378.6 L304.3 372.6 L308.5 379.8 Z"/>
<path stroke-width="0.9" fill="#f4fbfc" d="M298.5 378.6 L303.0 382.8 L308.5 379.8 L304.0 375.6 Z"/>
<path stroke-width="0.55" d="M301.0 378.9 L303.4 380.0 L306.0 379.5"/>
<path stroke-width="0.5" d="M300.0 377.1 L303.8 376.8 M301.4 375.6 L304.0 375.1 M302.9 374.1 L304.2 373.5"/>
<path stroke-width="0.8" fill="#a5dae3" d="M308.9 379.4 L314.3 372.6 L320.1 379.0 Z"/>
<path stroke-width="0.9" fill="#f4fbfc" d="M308.9 379.4 L314.6 382.8 L320.1 379.0 L314.4 375.6 Z"/>
<path stroke-width="0.55" d="M311.7 379.3 L314.5 380.0 L317.3 379.1"/>
<path stroke-width="0.5" d="M310.2 377.7 L314.4 376.8 M311.6 376.0 L314.3 375.1 M312.9 374.3 L314.3 373.5"/>
<path stroke-width="0.6" fill="#55bece" d="M506.2 323.2 L509.8 323 L510.6 331 L514.5 339.5 L511 340.5 L508.5 336 L505 341 L502 339.5 L505.6 331 Z"/>
<path stroke-width="1.0" fill="#55bece" fill-opacity="0.62" d="M479.6 356 C478 346 486 339.5 495 339 C505 338.6 513 346 514.5 362.5 C506 365.5 490 363.5 479.6 356 Z"/>
<path stroke-width="1.2" d="M479.8 357 C476.5 369 481 385 490.5 390.8 C502 386.5 511.5 377 513.6 363.5"/>
<path stroke-width="0.9" d="M489.5 389.5 L490.4 392.2 L492 389.8"/>
<path stroke-width="0.6" d="M482 365 C482.5 375 485.5 383 490 388"/>
<path stroke-width="1.0" fill="#55bece" fill-opacity="0.62" d="M508.5 364 C506.5 350 516 338 528 337 C538 336.4 545 343 545.2 352.5 C535 351 519 355 508.5 364 Z"/>
<path stroke-width="0.0" fill="#f2fafb" d="M481.6 352.1 a0.9 0.9 0 1 0 1.8 0 a0.9 0.9 0 1 0 -1.8 0 M484.7 346.2 a0.9 0.9 0 1 0 1.8 0 a0.9 0.9 0 1 0 -1.8 0 M483.0 349.2 a0.9 0.9 0 1 0 1.8 0 a0.9 0.9 0 1 0 -1.8 0 M484.3 351.8 a0.9 0.9 0 1 0 1.8 0 a0.9 0.9 0 1 0 -1.8 0 M487.9 345.6 a0.9 0.9 0 1 0 1.8 0 a0.9 0.9 0 1 0 -1.8 0 M486.0 349.0 a0.9 0.9 0 1 0 1.8 0 a0.9 0.9 0 1 0 -1.8 0 M487.2 351.9 a0.9 0.9 0 1 0 1.8 0 a0.9 0.9 0 1 0 -1.8 0 M488.8 343.0 a0.9 0.9 0 1 0 1.8 0 a0.9 0.9 0 1 0 -1.8 0 M490.2 345.7 a0.9 0.9 0 1 0 1.8 0 a0.9 0.9 0 1 0 -1.8 0 M489.1 349.3 a0.9 0.9 0 1 0 1.8 0 a0.9 0.9 0 1 0 -1.8 0 M490.5 351.9 a0.9 0.9 0 1 0 1.8 0 a0.9 0.9 0 1 0 -1.8 0 M489.2 354.7 a0.9 0.9 0 1 0 1.8 0 a0.9 0.9 0 1 0 -1.8 0 M492.2 342.7 a0.9 0.9 0 1 0 1.8 0 a0.9 0.9 0 1 0 -1.8 0 M493.4 346.4 a0.9 0.9 0 1 0 1.8 0 a0.9 0.9 0 1 0 -1.8 0 M492.5 348.7 a0.9 0.9 0 1 0 1.8 0 a0.9 0.9 0 1 0 -1.8 0 M493.8 352.4 a0.9 0.9 0 1 0 1.8 0 a0.9 0.9 0 1 0 -1.8 0 M491.9 355.1 a0.9 0.9 0 1 0 1.8 0 a0.9 0.9 0 1 0 -1.8 0 M495.0 343.3 a0.9 0.9 0 1 0 1.8 0 a0.9 0.9 0 1 0 -1.8 0 M496.7 346.0 a0.9 0.9 0 1 0 1.8 0 a0.9 0.9 0 1 0 -1.8 0 M495.0 349.4 a0.9 0.9 0 1 0 1.8 0 a0.9 0.9 0 1 0 -1.8 0 M496.7 351.6 a0.9 0.9 0 1 0 1.8 0 a0.9 0.9 0 1 0 -1.8 0 M495.3 354.9 a0.9 0.9 0 1 0 1.8 0 a0.9 0.9 0 1 0 -1.8 0 M497.8 343.2 a0.9 0.9 0 1 0 1.8 0 a0.9 0.9 0 1 0 -1.8 0 M499.2 346.2 a0.9 0.9 0 1 0 1.8 0 a0.9 0.9 0 1 0 -1.8 0 M498.3 349.0 a0.9 0.9 0 1 0 1.8 0 a0.9 0.9 0 1 0 -1.8 0 M499.8 351.8 a0.9 0.9 0 1 0 1.8 0 a0.9 0.9 0 1 0 -1.8 0 M498.3 354.9 a0.9 0.9 0 1 0 1.8 0 a0.9 0.9 0 1 0 -1.8 0 M501.2 342.7 a0.9 0.9 0 1 0 1.8 0 a0.9 0.9 0 1 0 -1.8 0 M502.9 345.8 a0.9 0.9 0 1 0 1.8 0 a0.9 0.9 0 1 0 -1.8 0 M500.7 349.4 a0.9 0.9 0 1 0 1.8 0 a0.9 0.9 0 1 0 -1.8 0 M502.3 352.4 a0.9 0.9 0 1 0 1.8 0 a0.9 0.9 0 1 0 -1.8 0 M501.5 355.1 a0.9 0.9 0 1 0 1.8 0 a0.9 0.9 0 1 0 -1.8 0 M502.2 357.6 a0.9 0.9 0 1 0 1.8 0 a0.9 0.9 0 1 0 -1.8 0 M505.6 345.7 a0.9 0.9 0 1 0 1.8 0 a0.9 0.9 0 1 0 -1.8 0 M503.8 349.0 a0.9 0.9 0 1 0 1.8 0 a0.9 0.9 0 1 0 -1.8 0 M505.8 351.7 a0.9 0.9 0 1 0 1.8 0 a0.9 0.9 0 1 0 -1.8 0 M504.1 355.2 a0.9 0.9 0 1 0 1.8 0 a0.9 0.9 0 1 0 -1.8 0 M505.8 357.9 a0.9 0.9 0 1 0 1.8 0 a0.9 0.9 0 1 0 -1.8 0 M507.1 348.7 a0.9 0.9 0 1 0 1.8 0 a0.9 0.9 0 1 0 -1.8 0 M508.7 351.7 a0.9 0.9 0 1 0 1.8 0 a0.9 0.9 0 1 0 -1.8 0 M507.3 354.8 a0.9 0.9 0 1 0 1.8 0 a0.9 0.9 0 1 0 -1.8 0 M508.2 357.7 a0.9 0.9 0 1 0 1.8 0 a0.9 0.9 0 1 0 -1.8 0 M509.7 349.4 a0.9 0.9 0 1 0 1.8 0 a0.9 0.9 0 1 0 -1.8 0 M510.1 355.0 a0.9 0.9 0 1 0 1.8 0 a0.9 0.9 0 1 0 -1.8 0 M510.2 361.0 a0.9 0.9 0 1 0 1.8 0 a0.9 0.9 0 1 0 -1.8 0 M516.0 347.3 a0.9 0.9 0 1 0 1.8 0 a0.9 0.9 0 1 0 -1.8 0 M513.8 349.9 a0.9 0.9 0 1 0 1.8 0 a0.9 0.9 0 1 0 -1.8 0 M515.4 353.2 a0.9 0.9 0 1 0 1.8 0 a0.9 0.9 0 1 0 -1.8 0 M513.9 355.8 a0.9 0.9 0 1 0 1.8 0 a0.9 0.9 0 1 0 -1.8 0 M515.3 358.7 a0.9 0.9 0 1 0 1.8 0 a0.9 0.9 0 1 0 -1.8 0 M517.1 344.0 a0.9 0.9 0 1 0 1.8 0 a0.9 0.9 0 1 0 -1.8 0 M518.5 347.1 a0.9 0.9 0 1 0 1.8 0 a0.9 0.9 0 1 0 -1.8 0 M516.9 349.8 a0.9 0.9 0 1 0 1.8 0 a0.9 0.9 0 1 0 -1.8 0 M518.6 352.8 a0.9 0.9 0 1 0 1.8 0 a0.9 0.9 0 1 0 -1.8 0 M517.1 356.4 a0.9 0.9 0 1 0 1.8 0 a0.9 0.9 0 1 0 -1.8 0 M518.2 358.7 a0.9 0.9 0 1 0 1.8 0 a0.9 0.9 0 1 0 -1.8 0 M521.4 341.3 a0.9 0.9 0 1 0 1.8 0 a0.9 0.9 0 1 0 -1.8 0 M520.2 343.8 a0.9 0.9 0 1 0 1.8 0 a0.9 0.9 0 1 0 -1.8 0 M521.2 346.8 a0.9 0.9 0 1 0 1.8 0 a0.9 0.9 0 1 0 -1.8 0 M519.9 350.2 a0.9 0.9 0 1 0 1.8 0 a0.9 0.9 0 1 0 -1.8 0 M522.0 353.2 a0.9 0.9 0 1 0 1.8 0 a0.9 0.9 0 1 0 -1.8 0 M520.4 356.3 a0.9 0.9 0 1 0 1.8 0 a0.9 0.9 0 1 0 -1.8 0 M524.5 340.8 a0.9 0.9 0 1 0 1.8 0 a0.9 0.9 0 1 0 -1.8 0 M523.2 344.0 a0.9 0.9 0 1 0 1.8 0 a0.9 0.9 0 1 0 -1.8 0 M524.5 347.3 a0.9 0.9 0 1 0 1.8 0 a0.9 0.9 0 1 0 -1.8 0 M523.0 349.8 a0.9 0.9 0 1 0 1.8 0 a0.9 0.9 0 1 0 -1.8 0 M524.4 353.0 a0.9 0.9 0 1 0 1.8 0 a0.9 0.9 0 1 0 -1.8 0 M523.2 356.1 a0.9 0.9 0 1 0 1.8 0 a0.9 0.9 0 1 0 -1.8 0 M527.3 341.0 a0.9 0.9 0 1 0 1.8 0 a0.9 0.9 0 1 0 -1.8 0 M525.9 344.2 a0.9 0.9 0 1 0 1.8 0 a0.9 0.9 0 1 0 -1.8 0 M527.7 346.7 a0.9 0.9 0 1 0 1.8 0 a0.9 0.9 0 1 0 -1.8 0 M526.2 349.9 a0.9 0.9 0 1 0 1.8 0 a0.9 0.9 0 1 0 -1.8 0 M527.6 353.1 a0.9 0.9 0 1 0 1.8 0 a0.9 0.9 0 1 0 -1.8 0 M526.3 356.3 a0.9 0.9 0 1 0 1.8 0 a0.9 0.9 0 1 0 -1.8 0 M530.2 341.0 a0.9 0.9 0 1 0 1.8 0 a0.9 0.9 0 1 0 -1.8 0 M529.1 344.3 a0.9 0.9 0 1 0 1.8 0 a0.9 0.9 0 1 0 -1.8 0 M530.5 347.3 a0.9 0.9 0 1 0 1.8 0 a0.9 0.9 0 1 0 -1.8 0 M529.1 349.7 a0.9 0.9 0 1 0 1.8 0 a0.9 0.9 0 1 0 -1.8 0 M530.8 352.8 a0.9 0.9 0 1 0 1.8 0 a0.9 0.9 0 1 0 -1.8 0 M529.1 355.7 a0.9 0.9 0 1 0 1.8 0 a0.9 0.9 0 1 0 -1.8 0 M533.3 340.7 a0.9 0.9 0 1 0 1.8 0 a0.9 0.9 0 1 0 -1.8 0 M532.4 344.4 a0.9 0.9 0 1 0 1.8 0 a0.9 0.9 0 1 0 -1.8 0 M533.7 346.9 a0.9 0.9 0 1 0 1.8 0 a0.9 0.9 0 1 0 -1.8 0 M532.4 350.0 a0.9 0.9 0 1 0 1.8 0 a0.9 0.9 0 1 0 -1.8 0 M533.3 353.2 a0.9 0.9 0 1 0 1.8 0 a0.9 0.9 0 1 0 -1.8 0 M534.7 344.1 a0.9 0.9 0 1 0 1.8 0 a0.9 0.9 0 1 0 -1.8 0 M536.2 347.0 a0.9 0.9 0 1 0 1.8 0 a0.9 0.9 0 1 0 -1.8 0 M535.4 350.1 a0.9 0.9 0 1 0 1.8 0 a0.9 0.9 0 1 0 -1.8 0 M536.9 353.2 a0.9 0.9 0 1 0 1.8 0 a0.9 0.9 0 1 0 -1.8 0 M538.2 344.0 a0.9 0.9 0 1 0 1.8 0 a0.9 0.9 0 1 0 -1.8 0 M539.9 346.6 a0.9 0.9 0 1 0 1.8 0 a0.9 0.9 0 1 0 -1.8 0 M537.8 350.2 a0.9 0.9 0 1 0 1.8 0 a0.9 0.9 0 1 0 -1.8 0 M539.7 352.7 a0.9 0.9 0 1 0 1.8 0 a0.9 0.9 0 1 0 -1.8 0 M541.1 349.6 a0.9 0.9 0 1 0 1.8 0 a0.9 0.9 0 1 0 -1.8 0"/>
<path stroke-width="1.2" d="M510 364.5 C515 376 527 384 540.5 384.5 C546.5 378 548 364 545 353"/>
<path stroke-width="0.9" d="M539.4 383.6 L541.8 386.6 L541.8 383.4"/>
<path stroke-width="0.6" d="M512.5 367.5 C516 374.5 521 379 527 381.5"/>
<path stroke-width="0.5" d="M501.0 368.0 L499.0 377.0 M502.6 368.4 L500.6 376.4 M504.2 368.8 L502.2 375.8 M505.8 369.2 L503.8 375.2 M507.4 369.6 L505.4 374.6 M509.0 370.0 L507.0 374.0"/>
<g stroke="#8a9ef9" stroke-width="0.65" stroke-linecap="butt" stroke-linejoin="miter">
<rect x="248.5" y="89" width="311.5" height="320.5"/>
<path d="M248.5 89 L560 409.5 M560 89 L248.5 409.5"/>
<rect x="246.9" y="87.4" width="3.2" height="3.2" fill="#ffffff"/>
<rect x="402.59999999999997" y="87.4" width="3.2" height="3.2" fill="#ffffff"/>
<rect x="558.4" y="87.4" width="3.2" height="3.2" fill="#ffffff"/>
<rect x="246.9" y="247.6" width="3.2" height="3.2" fill="#ffffff"/>
<rect x="558.4" y="247.6" width="3.2" height="3.2" fill="#ffffff"/>
<rect x="246.9" y="407.9" width="3.2" height="3.2" fill="#ffffff"/>
<rect x="402.59999999999997" y="407.9" width="3.2" height="3.2" fill="#ffffff"/>
<rect x="558.4" y="407.9" width="3.2" height="3.2" fill="#ffffff"/>
</g>
<circle cx="565.2" cy="432.8" r="15.6" fill="#f8961c" stroke="none"/>
<text x="565.3" y="440.8" font-family="Liberation Sans, sans-serif" font-size="23" fill="#ffffff" stroke="#ffffff" stroke-width="0.2" text-anchor="middle">5</text>
</svg>
<svg id="ticons" style="left:0;top:0" width="960" height="540" viewBox="0 0 960 540" fill="none" stroke-linecap="round" stroke-linejoin="round">
<defs>
<linearGradient id="gr1" x1="0" x2="1" y1="0" y2="0"><stop offset="0" stop-color="#2e2e2e"/><stop offset="1" stop-color="#d8d8d8"/></linearGradient>
<linearGradient id="gr2" x1="0" x2="1" y1="0" y2="0"><stop offset="0" stop-color="#ffffff"/><stop offset="1" stop-color="#6a6a6a"/></linearGradient>
</defs>
<!-- AI logo -->
<rect x="9.2" y="6.2" width="10.6" height="10.2" rx="1" fill="#2a1400" stroke="#e8870f" stroke-width="1"/>
<text x="14.5" y="14.3" font-family="Liberation Sans, sans-serif" font-weight="bold" font-size="6.6" fill="#f59519" text-anchor="middle" stroke="none">Ai</text>
<!-- home -->
<path d="M29.3 11.2 L35.5 5.6 L41.7 11.2 L40 11.2 L40 16.4 L36.9 16.4 L36.9 12.6 L34.1 12.6 L34.1 16.4 L31 16.4 L31 11.2 Z" fill="#dedede" stroke="none"/>
<!-- workspace switcher -->
<rect x="370" y="6.8" width="4.6" height="7.4" fill="#d8d8d8"/><rect x="375.6" y="6.8" width="6" height="3.2" fill="#d8d8d8"/><rect x="375.6" y="11" width="6" height="3.2" fill="#d8d8d8"/>
<path d="M387 9.3 L389.3 11.5 L391.6 9.3" stroke="#e4e4e4" stroke-width="1.3"/>
<path d="M764 10.8 L766.2 13 L768.4 10.8" stroke="#e4e4e4" stroke-width="1.3"/>
<!-- search icon -->
<circle cx="789.3" cy="10.2" r="2.4" stroke="#dcdcdc" stroke-width="1.1"/><path d="M791 12 L793 14.2" stroke="#dcdcdc" stroke-width="1.3"/>
<path d="M794.2 10.3 L795.8 11.9 L797.4 10.3" stroke="#dcdcdc" stroke-width="1"/>
<!-- window controls -->
<rect x="906" y="8" width="7.8" height="2" fill="#d6d6d6"/>
<rect x="925.4" y="5.9" width="6.2" height="3.9" stroke="#d6d6d6" stroke-width="1.1" stroke-linejoin="miter"/><rect x="924.9" y="5" width="7.2" height="1.6" fill="#d6d6d6"/>
<path d="M943.3 4.2 L949.5 10 M949.5 4.2 L943.3 10" stroke="#d6d6d6" stroke-width="1.3" stroke-linecap="butt"/>
<!-- collapse chevrons -->
<path d="M7.2 25.8 L8.5 27 L7.2 28.2 M9.6 25.8 L10.9 27 L9.6 28.2" stroke="#c4c4c4" stroke-width="0.7" stroke-linecap="butt"/>
<path d="M948.4 25.8 L949.7 27 L948.4 28.2 M950.8 25.8 L952.1 27 L950.8 28.2" stroke="#c4c4c4" stroke-width="0.7" stroke-linecap="butt"/>
<!-- grip -->
<path d="M9.5 34.5 H21.5" stroke="#6a6a6a" stroke-width="1.6" stroke-dasharray="0.8 0.8" stroke-linecap="butt"/>
<!-- selection tool (active) -->
<rect x="7" y="44.6" width="18" height="13.2" rx="1.5" fill="#2c2c2c"/>
<path d="M13 47.4 L13 56.6 L15.6 54.4 L21 53.2 Z" stroke="#e0e0e0" stroke-width="0.9"/>
<!-- direct selection -->
<path d="M13 62.8 L13.6 72.9 L16.2 70.3 L20.9 69.6 Z" fill="#d2d2d2"/>
<g fill="#c8c8c8">
<path d="M24.6 71.6 V74 H22.2 Z"/><path d="M24.6 87.6 V90 H22.2 Z"/><path d="M24.6 118.6 V121 H22.2 Z"/><path d="M24.6 134.6 V137 H22.2 Z"/><path d="M24.6 150 V152.4 H22.2 Z"/><path d="M24.6 165.6 V168 H22.2 Z"/><path d="M24.6 181.6 V184 H22.2 Z"/><path d="M24.6 212.6 V215 H22.2 Z"/><path d="M24.6 291.6 V294 H22.2 Z"/>
</g>
<!-- pen -->
<path d="M11 88.6 L12.2 83.2 L16.4 79.6 L19.9 83.1 L16.3 87.3 Z" fill="#d2d2d2"/>
<path d="M17.6 78.9 L19.4 77.3 L22.3 80.2 L20.7 82 Z" fill="#d2d2d2"/>
<path d="M11.3 88.3 L15 84.6" stroke="#535353" stroke-width="0.8"/><circle cx="15.4" cy="84.2" r="0.9" fill="#535353"/>
<!-- curvature pen -->
<path d="M13 104.3 L14 99.3 L17.8 95.9 L21 99.1 L17.7 103 Z" fill="#d2d2d2"/>
<path d="M18.9 95.2 L20.5 93.7 L23.2 96.4 L21.7 98 Z" fill="#d2d2d2"/>
<path d="M13.3 104 L16.6 100.7" stroke="#535353" stroke-width="0.8"/><circle cx="17" cy="100.3" r="0.8" fill="#535353"/>
<path d="M12.6 104.4 C10 105 9.4 102.6 10.8 101 C12.2 99.4 11 97.6 9.6 98.6" stroke="#d2d2d2" stroke-width="1"/>
<!-- rectangle -->
<rect x="11.3" y="110.4" width="10.2" height="8.4" fill="#787878" stroke="#d4d4d4" stroke-width="1"/>
<!-- brush -->
<path d="M21.3 125.4 L15.6 131.4" stroke="#d2d2d2" stroke-width="1.8"/>
<path d="M14.8 131 C13.4 130.8 12.4 132 12.4 133.4 C12.4 134.6 11.6 135.4 11 135.8 C13.4 136.2 16 134.8 15.8 132.2 Z" fill="#d2d2d2"/>
<!-- type -->
<text x="16.1" y="150.9" font-family="Liberation Serif, serif" font-weight="bold" font-size="13.4" fill="#dadada" text-anchor="middle" stroke="none">T</text>
<!-- rotate -->
<path d="M13.4 158.6 A4.6 4.6 0 1 1 12.6 164.6" stroke="#d2d2d2" stroke-width="1.2"/>
<path d="M12.6 164.6 A4.6 4.6 0 0 1 13.4 158.6" stroke="#8a8a8a" stroke-width="1" stroke-dasharray="1 1"/>
<path d="M11.6 156.6 L14.8 157.6 L12.6 160.4 Z" fill="#d2d2d2"/>
<!-- eraser -->
<path d="M11 178.6 L16.6 172.8 L22 176 L17.2 182.4 L14 182.4 Z" fill="#d8d8d8"/>
<path d="M12.6 177.4 L17.6 180.6" stroke="#535353" stroke-width="0.9"/>
<!-- shape builder -->
<path d="M15.4 197.4 C11 197.6 9.8 194.6 11.2 193 C10.6 190.6 13.6 189.2 15.2 190.4 C17 189 19.8 190.2 19.4 192.4" stroke="#d2d2d2" stroke-width="1"/>
<path d="M13.8 193.4 H16.8" stroke="#d2d2d2" stroke-width="0.8"/>
<path d="M17.2 192.6 L17.8 199.8 L19.6 198 L22.6 197.6 Z" fill="#d2d2d2"/>
<!-- gradient -->
<rect x="10.8" y="204.4" width="10.6" height="9.4" fill="url(#gr1)" stroke="#d4d4d4" stroke-width="1"/>
<!-- eyedropper -->
<path d="M11 229.8 L11.6 227.4 L17 222 L18.8 223.8 L13.4 229.2 Z" stroke="#d2d2d2" stroke-width="1"/>
<path d="M16.6 221.6 L19.2 224.2 M17.4 222 L19.6 219.6 C20.6 218.6 22.4 220.4 21.4 221.4 L19 223.8" stroke="#d2d2d2" stroke-width="1.7"/>
<!-- symbol sprayer / warp -->
<path d="M11 244.6 C12.6 241.6 14 240.4 15.8 241.6 C17.6 242.8 19.2 244 22.2 241.4 C21.4 239.6 19.4 238.4 17.6 239.6 C16.6 238 17.4 236.6 15.6 236.6 C13.8 236.6 13.4 238.6 14.4 239.6 C12.8 240 12 241 11.6 242.4" stroke="#d2d2d2" stroke-width="1.5"/>
<circle cx="10.8" cy="244.6" r="1" fill="#d2d2d2"/>
<!-- blend shapes -->
<rect x="10.2" y="251.8" width="5.6" height="5.4" fill="#d2d2d2"/>
<rect x="13.8" y="254.2" width="5" height="4.8" fill="#535353" stroke="#d2d2d2" stroke-width="0.9"/>
<circle cx="19.4" cy="258.2" r="2.6" fill="#535353" stroke="#d2d2d2" stroke-width="0.9"/>
<!-- artboard -->
<path d="M13.6 265.8 V269.6 M10.2 269.6 H13.6" stroke="#d2d2d2" stroke-width="1"/>
<path d="M13.6 269.6 H18.4 L21 272.2 V276.4 H13.6 Z" stroke="#d2d2d2" stroke-width="1"/>
<path d="M18.4 269.6 V272.2 H21" stroke="#d2d2d2" stroke-width="0.8"/>
<!-- zoom -->
<circle cx="14.6" cy="286.8" r="3.8" stroke="#d2d2d2" stroke-width="1.2"/>
<path d="M17.6 289.8 L21.8 294" stroke="#d2d2d2" stroke-width="1.6"/>
<!-- default fill/stroke -->
<rect x="9.4" y="303" width="4.6" height="4.6" fill="#111" stroke="#e6e6e6" stroke-width="0.8"/>
<rect x="6.6" y="300.2" width="5" height="5" fill="#fff" stroke="#222" stroke-width="0.6"/>
<!-- swap -->
<path d="M21.6 303 C23.6 302.6 25.2 304 25 306.4" stroke="#d2d2d2" stroke-width="1.2"/>
<path d="M20 303 L22.6 301.2 L22.6 304.8 Z M25 308.4 L23.2 305.8 L26.8 305.8 Z" fill="#d2d2d2"/>
<!-- fill & stroke -->
<rect x="14" y="319.8" width="11.4" height="11.4" fill="#0a0a0a"/>
<rect x="16.6" y="322.4" width="6.2" height="6.2" fill="#535353" stroke="#e8e8e8" stroke-width="0.6"/>
<rect x="6.4" y="312.4" width="12.4" height="12.6" fill="#ffffff" stroke="#3a3a3a" stroke-width="0.5"/>
<!-- colour / gradient / none -->
<rect x="7.6" y="336.4" width="4.8" height="5.2" fill="#f4f4f4"/>
<rect x="13.4" y="336.4" width="4.2" height="5.2" fill="url(#gr2)"/>
<rect x="18.8" y="336.4" width="6.2" height="5.2" fill="#f4f4f4"/>
<path d="M19 341.4 L24.8 336.6" stroke="#e8141c" stroke-width="1.3" stroke-linecap="butt"/>
<!-- draw mode -->
<circle cx="15.4" cy="350.6" r="2.6" stroke="#cfcfcf" stroke-width="0.9"/>
<rect x="15.6" y="351" width="4.2" height="4" fill="#bdbdbd" stroke="#d8d8d8" stroke-width="0.6"/>
<!-- screen mode -->
<rect x="13.6" y="363.4" width="8.6" height="5.8" fill="#6c6c6c" stroke="#d2d2d2" stroke-width="0.9"/>
<rect x="10.4" y="365.8" width="8.4" height="5.6" fill="#6c6c6c" stroke="#d2d2d2" stroke-width="0.9"/>
<!-- more -->
<g fill="#d8d8d8"><circle cx="12.6" cy="388.9" r="1"/><circle cx="16.4" cy="388.9" r="1"/><circle cx="20.2" cy="388.9" r="1"/></g>
</svg>
<span class="t" style="left:799.3px;top:36.5px;font-size:7.3px;line-height:7.3px;color:#ffffff;transform:scaleX(0.844);transform-origin:0 0;font-weight:bold;">Propiedades</span>
<span class="t" style="left:848.3px;top:36.5px;font-size:7.3px;line-height:7.3px;color:#b4b4b4;transform:scaleX(0.808);transform-origin:0 0;font-weight:bold;">Capas</span>
<span class="t" style="left:878.5px;top:36.5px;font-size:7.3px;line-height:7.3px;color:#b4b4b4;transform:scaleX(0.847);transform-origin:0 0;font-weight:bold;">Bibliotecas</span>
<span class="t" style="left:800.2px;top:56.3px;font-size:7.4px;line-height:7.4px;color:#f0f0f0;transform:scaleX(0.870);transform-origin:0 0;">Archivo enlazado</span>
<div style="left:800px;top:64px;width:50px;height:1px;background:transparent;border-top:1px dotted #bdbdbd"></div>
<div style="left:800px;top:70px;width:145px;height:1px;background:#4b4b4b;"></div>
<span class="t" style="left:799.6px;top:78.9px;font-size:7.4px;line-height:7.4px;color:#d2d2d2;transform:scaleX(0.849);transform-origin:0 0;">Transform</span>
<span class="t" style="left:819.3px;top:94.5px;font-size:7.2px;line-height:7.2px;color:#d2d2d2;transform:scaleX(0.764);transform-origin:0 0;">X:</span>
<span class="t" style="left:819.3px;top:111.2px;font-size:7.2px;line-height:7.2px;color:#d2d2d2;transform:scaleX(0.812);transform-origin:0 0;">Y:</span>
<span class="t" style="left:876.0px;top:94.5px;font-size:7.2px;line-height:7.2px;color:#d2d2d2;transform:scaleX(0.923);transform-origin:0 0;">W:</span>
<span class="t" style="left:876.5px;top:111.2px;font-size:7.2px;line-height:7.2px;color:#d2d2d2;transform:scaleX(0.903);transform-origin:0 0;">H:</span>
<div class="fld" style="left:829.8px;top:92.2px;width:35.4px;height:11.2px"></div>
<div class="fld" style="left:889.8px;top:92.2px;width:35.4px;height:11.2px"></div>
<div class="fld" style="left:829.8px;top:108.9px;width:35.4px;height:11.2px"></div>
<div class="fld" style="left:889.8px;top:108.9px;width:35.4px;height:11.2px"></div>
<div style="left:833.0px;top:93.3px;width:31.3px;height:10.3px;overflow:hidden;background:transparent"><span class="t" style="position:absolute;left:0;top:1px;font-size:7.3px;line-height:7.3px;color:#f2f2f2;transform:scaleX(0.926);transform-origin:0 0">107,6234 mm</span></div>
<div style="left:893.0px;top:93.3px;width:31.3px;height:10.3px;overflow:hidden;background:transparent"><span class="t" style="position:absolute;left:0;top:1px;font-size:7.3px;line-height:7.3px;color:#f2f2f2;transform:scaleX(0.926);transform-origin:0 0">190,6073 mm</span></div>
<div style="left:833.0px;top:110.0px;width:31.3px;height:10.3px;overflow:hidden;background:transparent"><span class="t" style="position:absolute;left:0;top:1px;font-size:7.3px;line-height:7.3px;color:#f2f2f2;transform:scaleX(0.943);transform-origin:0 0">118,3363 mm</span></div>
<div style="left:893.0px;top:110.0px;width:31.3px;height:10.3px;overflow:hidden;background:transparent"><span class="t" style="position:absolute;left:0;top:1px;font-size:7.3px;line-height:7.3px;color:#f2f2f2;transform:scaleX(0.926);transform-origin:0 0">196,0895 mm</span></div>
<div class="fld" style="left:828px;top:126px;width:23.5px;height:11.2px"></div>
<div class="fld" style="left:852px;top:126px;width:11.4px;height:11.2px"></div>
<span class="t" style="left:824.6px;top:127.9px;font-size:7.2px;line-height:7.2px;color:#d2d2d2;">:</span>
<span class="t" style="left:829.6px;top:128.1px;font-size:7.3px;line-height:7.3px;color:#f2f2f2;transform:scaleX(0.845);transform-origin:0 0;">0°</span>
<div style="left:799px;top:154px;width:146px;height:1px;background:#4b4b4b;"></div>
<span class="t" style="left:799.3px;top:160.8px;font-size:7.4px;line-height:7.4px;color:#d2d2d2;transform:scaleX(0.844);transform-origin:0 0;">Appearance</span>
<div style="left:799.6px;top:177.4px;width:11.2px;height:10.8px;background:#ffffff;"></div>
<span class="t" style="left:818.7px;top:180.3px;font-size:7.4px;line-height:7.4px;color:#d2d2d2;transform:scaleX(0.846);transform-origin:0 0;">Fill</span>
<span class="t" style="left:818.7px;top:199.0px;font-size:7.4px;line-height:7.4px;color:#ececec;transform:scaleX(0.865);transform-origin:0 0;">Stroke</span>
<div style="left:818.7px;top:206.6px;width:18.6px;height:1px;background:transparent;border-top:1px dotted #bdbdbd"></div>
<span class="t" style="left:818.7px;top:217.3px;font-size:7.4px;line-height:7.4px;color:#ececec;transform:scaleX(0.865);transform-origin:0 0;">Opacity</span>
<div style="left:818.7px;top:225.4px;width:21.8px;height:1px;background:transparent;border-top:1px dotted #bdbdbd"></div>
<div class="fld" style="left:851px;top:195.6px;width:11.6px;height:12px"></div>
<div class="fld" style="left:863px;top:195.6px;width:20.6px;height:12px"></div>
<div class="fld" style="left:884.4px;top:195.6px;width:11.4px;height:12px"></div>
<span class="t" style="left:865.3px;top:198.4px;font-size:7.3px;line-height:7.3px;color:#f2f2f2;transform:scaleX(1.002);transform-origin:0 0;">1 pt</span>
<div class="fld" style="left:851.4px;top:214.8px;width:32.2px;height:11.4px"></div>
<div class="fld" style="left:884.4px;top:214.8px;width:11.4px;height:11.4px"></div>
<span class="t" style="left:853.4px;top:217.1px;font-size:7.3px;line-height:7.3px;color:#f2f2f2;transform:scaleX(0.921);transform-origin:0 0;">100%</span>
<span class="t" style="left:804.0px;top:238.5px;font-size:9.6px;line-height:9.6px;color:#d6d6d6;transform:scaleX(0.884);transform-origin:0 0;font-style:italic;">fx</span>
<span class="t" style="left:811.2px;top:241.1px;font-size:7px;line-height:7px;color:#d6d6d6;">.</span>
<div style="left:799px;top:265.5px;width:146px;height:1px;background:#4b4b4b;"></div>
<span class="t" style="left:799.3px;top:276.8px;font-size:7.4px;line-height:7.4px;color:#d2d2d2;transform:scaleX(0.863);transform-origin:0 0;">Quick Actions</span>
<div class="btn" style="left:798.9px;top:292.2px;width:71.8px;height:13.4px"></div>
<div class="btn" style="left:876.6px;top:292.2px;width:71.8px;height:13.4px"></div>
<span class="t" style="left:824.8px;top:295.8px;font-size:7.4px;line-height:7.4px;color:#f0f0f0;transform:scaleX(0.844);transform-origin:0 0;">Embed</span>
<span class="t" style="left:894.6px;top:295.8px;font-size:7.4px;line-height:7.4px;color:#f0f0f0;transform:scaleX(0.878);transform-origin:0 0;">Edit Original</span>
<div class="btn" style="left:798.9px;top:312.1px;width:71.8px;height:13.4px"></div>
<div class="btn" style="left:876.6px;top:312.1px;width:71.8px;height:13.4px"></div>
<span class="t" style="left:827.4px;top:315.7px;font-size:7.4px;line-height:7.4px;color:#f0f0f0;transform:scaleX(0.860);transform-origin:0 0;">Mask</span>
<span class="t" style="left:895.5px;top:315.7px;font-size:7.4px;line-height:7.4px;color:#f0f0f0;transform:scaleX(0.879);transform-origin:0 0;">Crop Image</span>
<div class="btn" style="left:798.9px;top:332.4px;width:71.8px;height:13.4px"></div>
<div class="btn" style="left:876.6px;top:332.4px;width:71.8px;height:13.4px"></div>
<span class="t" style="left:817.0px;top:336.0px;font-size:7.4px;line-height:7.4px;color:#f0f0f0;transform:scaleX(0.875);transform-origin:0 0;">Image Trace</span>
<span class="t" style="left:901.0px;top:336.0px;font-size:7.4px;line-height:7.4px;color:#f0f0f0;transform:scaleX(0.866);transform-origin:0 0;">Arrange</span>
<svg id="picons" style="left:0;top:0" width="960" height="540" viewBox="0 0 960 540" fill="none" stroke-linecap="round" stroke-linejoin="round">
<!-- reference point grid -->
<g stroke="#d0d0d0" stroke-width="0.7" fill="#535353">
<path d="M800.9 100.9 H810.3 V110.3 H800.9 Z M800.9 105.6 H810.3 M805.6 100.9 V110.3" fill="none" stroke="#9a9a9a" stroke-width="0.6"/>
<rect x="799.5" y="99.5" width="2.8" height="2.8"/><rect x="804.2" y="99.5" width="2.8" height="2.8"/><rect x="808.9" y="99.5" width="2.8" height="2.8"/>
<rect x="799.5" y="104.2" width="2.8" height="2.8"/><rect x="804.2" y="104.2" width="2.8" height="2.8" fill="#ffffff" stroke="#ffffff"/><rect x="808.9" y="104.2" width="2.8" height="2.8"/>
<rect x="799.5" y="108.9" width="2.8" height="2.8"/><rect x="804.2" y="108.9" width="2.8" height="2.8"/><rect x="808.9" y="108.9" width="2.8" height="2.8"/>
</g>
<!-- link (constrain) broken -->
<g stroke="#d6d6d6" stroke-width="1.1">
<path d="M939.4 106 V104.6 C939.4 101.8 943.4 101.8 943.4 104.6 V106"/>
<path d="M939.4 108 V109.2 C939.4 112 943.4 112 943.4 109.2 V108"/>
<path d="M936.8 102 L945.4 111.4" stroke-width="1"/>
</g>
<!-- angle icon -->
<path d="M822.6 132.6 H816.4 L821 127.8" stroke="#d0d0d0" stroke-width="0.9"/>
<path d="M819.4 132.4 C819.4 131 818.8 130.2 818.2 129.8" stroke="#d0d0d0" stroke-width="0.8"/>
<!-- dropdown chevrons -->
<g stroke="#e4e4e4" stroke-width="1.1">
<path d="M855.6 130.6 L857.7 132.6 L859.8 130.6"/>
<path d="M888 200.6 L890.1 202.6 L892.2 200.6"/>
<path d="M889.2 218.3 L891.3 220.5 L889.2 222.7"/>
<path d="M854.6 199.6 L856.8 197.6 L859 199.6 M854.6 203.8 L856.8 205.8 L859 203.8"/>
</g>
<!-- flip icons -->
<g fill="#d2d2d2" stroke="none">
<path d="M891.2 129.4 L894.6 132.9 L891.2 136.4 Z" fill="none" stroke="#d2d2d2" stroke-width="0.8"/>
<path d="M900.4 129.4 L897 132.9 L900.4 136.4 Z"/>
<rect x="895.4" y="128.6" width="0.8" height="8.6"/>
<path d="M908 128.8 L911.5 132.2 L915 128.8 Z"/>
<path d="M908 137.4 L911.5 134 L915 137.4 Z" fill="none" stroke="#d2d2d2" stroke-width="0.8"/>
<rect x="907.4" y="132.7" width="8.4" height="0.8"/>
</g>
<!-- more dots -->
<g fill="#dcdcdc" stroke="none">
<circle cx="936.4" cy="146" r="1"/><circle cx="939.7" cy="146" r="1"/><circle cx="943" cy="146" r="1"/>
<circle cx="936.4" cy="259" r="1"/><circle cx="939.7" cy="259" r="1"/><circle cx="943" cy="259" r="1"/>
</g>
<!-- stroke swatch -->
<rect x="799.8" y="196.6" width="10.8" height="10.6" fill="#0c0c0c" stroke="#7c7c7c" stroke-width="0.6"/>
<rect x="802.9" y="199.6" width="4.6" height="4.6" fill="#4e4e4e" stroke="#bdbdbd" stroke-width="0.5"/>
<!-- opacity swatch -->
<rect x="799.9" y="215.4" width="10.6" height="10.4" fill="#5e5e5e" stroke="#bcbcbc" stroke-width="0.7"/>
<g fill="#747474" stroke="none"><rect x="800.6" y="216" width="3" height="3"/><rect x="806.6" y="216" width="3" height="3"/><rect x="803.6" y="219" width="3" height="3"/><rect x="800.6" y="222" width="3" height="3"/><rect x="806.6" y="222" width="3" height="3"/></g>
<!-- scroll arrows -->
<g stroke="#bdbdbd" stroke-width="1">
<path d="M783.4 49.6 L785.6 47.4 L787.8 49.6"/>
<path d="M783.4 519.4 L785.6 521.6 L787.8 519.4"/>
<path d="M773.6 529.4 L775.6 531.6 L773.6 533.8"/>
<path d="M320.4 529.6 L318.4 531.8 L320.4 534" stroke="#9a9a9a"/>
</g>
<!-- status bar icons -->
<g stroke="#e4e4e4" stroke-width="1.1">
<path d="M68.8 530.8 L70.9 532.8 L73 530.8"/>
<path d="M134.4 530.8 L136.5 532.8 L138.6 530.8"/>
</g>
<g fill="#757575" stroke="none">
<rect x="83.4" y="529.4" width="1" height="5"/><path d="M88.4 529.4 V534.4 L85.2 531.9 Z"/>
<path d="M99.2 529.4 V534.4 L96 531.9 Z"/>
<path d="M150.2 529.4 V534.4 L153.4 531.9 Z"/>
<path d="M160.2 529.4 V534.4 L163.4 531.9 Z"/><rect x="164" y="529.4" width="1" height="5"/>
</g>
<path d="M306.6 529 V534.6 L310 531.8 Z" fill="#e8e8e8"/>
</svg>
</div>
</body>
</html>
